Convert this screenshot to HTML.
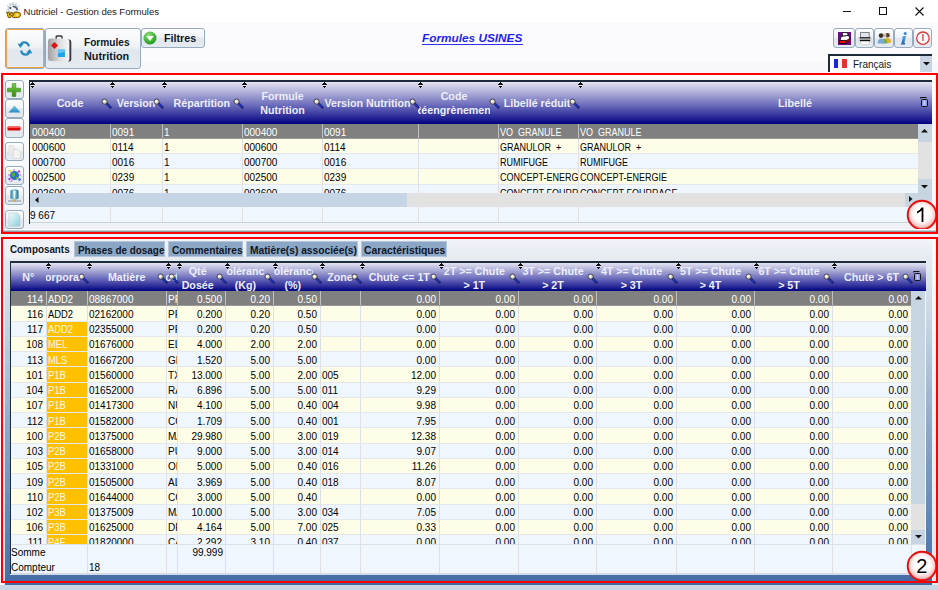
<!DOCTYPE html><html><head><meta charset="utf-8"><style>
*{margin:0;padding:0;box-sizing:border-box}
html,body{width:938px;height:590px;overflow:hidden;background:#fbfbfe;font-family:"Liberation Sans", sans-serif;}
.a{position:absolute}
.t{position:absolute;white-space:nowrap;line-height:1}
.btn{position:absolute;border:1px solid #97abbf;border-radius:3px;background:linear-gradient(#fdfdfe 0%,#f0f3f6 45%,#e1e7ee 55%,#e6ebf1 100%)}
.hdr{position:absolute;background:linear-gradient(#e4e4f2 0%,#aeaed8 25%,#6c6cbc 55%,#262696 85%,#000080 100%)}
.ht{position:absolute;white-space:nowrap;color:#eceefa;font-weight:bold;font-size:10.7px;line-height:14px;overflow:hidden}
.row{position:absolute;left:0;right:0;overflow:hidden}
.c{position:absolute;top:0;height:100%;overflow:hidden;white-space:nowrap;font-size:10px;line-height:16px;padding:0 0 0 1px;color:#000}
.r{text-align:right;padding-right:3px}
.u{display:inline-block;transform-origin:0 0}
</style></head><body>
<div class="a" style="left:0;top:0;width:938px;height:23px;background:#fff"></div>
<svg class="a" style="left:4px;top:2px" width="18" height="18" viewBox="0 0 18 18">
<circle cx="9" cy="6.8" r="5.6" fill="none" stroke="#d4dce4" stroke-width="2.4" stroke-dasharray="1.8 1.3"/>
<circle cx="9" cy="6.8" r="4.6" fill="#eef3f8" stroke="#9aa6b2" stroke-width="0.6"/>
<path d="M8.6 4.6 Q12.2 4 13.2 8.2" fill="none" stroke="#4a5560" stroke-width="1.4"/>
<circle cx="6.4" cy="6" r="1" fill="#3a4450"/>
<path d="M2.6 10.2 L5 10.2 L5.9 13.4 L6.9 10.6 L8.5 10.6 L9.4 13.4 L10.2 10.2 L13.6 10.2 Q16.8 10.4 16.6 12.8 Q16.4 15.6 13.4 15.6 L9.8 15.6 L8.9 15.6 L7.7 13 L6.6 15.6 L4.4 15.6 Z" fill="#f4c400" stroke="#5a4200" stroke-width="0.9"/>
<circle cx="13.3" cy="12.9" r="1.1" fill="#e0e8f4"/>
</svg>
<div class="t" style="left:23.5px;top:7px;font-size:9.6px;letter-spacing:-0.05px;color:#1a1a2a">Nutriciel - Gestion des Formules</div>
<div class="a" style="left:843px;top:11px;width:8px;height:1px;background:#111"></div>
<div class="a" style="left:879px;top:7px;width:8px;height:8px;border:1px solid #111"></div>
<svg class="a" style="left:915px;top:7px" width="9" height="9" viewBox="0 0 9 9"><path d="M0.5 0.5 L8.5 8.5 M8.5 0.5 L0.5 8.5" stroke="#111" stroke-width="1.1"/></svg>
<div class="a" style="left:0;top:62px;width:938px;height:11px;background:#f8f8fc"></div>
<div class="btn" style="left:5px;top:28px;width:40px;height:41px;"><div class="a" style="left:0;top:0;right:0;bottom:0;border:1.5px solid #f4a43c;border-radius:2px"></div></div>
<svg class="a" style="left:16px;top:39px" width="18" height="19" viewBox="0 0 18 19">
<path d="M13 7.4 Q11.6 2.8 7.4 3.4 Q5.6 3.8 4.8 5.6" fill="none" stroke="#2389bf" stroke-width="2.3"/>
<path d="M4.2 9 L1.6 4.4 L7.6 5.2 Z" fill="#2389bf"/>
<path d="M5 11.6 Q6.4 16.2 10.6 15.6 Q12.4 15.2 13.2 13.4" fill="none" stroke="#2389bf" stroke-width="2.3"/>
<path d="M13.8 10 L16.4 14.6 L10.4 13.8 Z" fill="#2389bf"/>
</svg>
<div class="btn" style="left:45px;top:28px;width:96px;height:41px;"></div>
<svg class="a" style="left:47px;top:35px" width="26" height="28" viewBox="0 0 26 28">
<defs><linearGradient id="bagg" x1="0" y1="0" x2="1" y2="0"><stop offset="0" stop-color="#a0a0a4"/><stop offset="0.55" stop-color="#e2e2e4"/><stop offset="1" stop-color="#fafafa"/></linearGradient></defs>
<path d="M9.2 4 L9.2 1.8 Q9.2 1 10 1 L14.2 1 Q15 1 15 1.8 L15 4" fill="none" stroke="#34343a" stroke-width="1.4"/>
<path d="M1 6 Q1 3.6 3.4 3.6 L21 3.6 Q24.3 3.6 24.3 6.6 L24.3 24.6 Q24.3 26.6 22 26.6 L3.4 26 Q1 26 1 23.6 Z" fill="url(#bagg)"/>
<path d="M22 4.2 Q24.3 4.8 24.3 6.8 L24.3 24.6 Q24.3 26.6 22 26.6 L20.6 26.6 Q22.4 26 22.4 24.4 L22.4 7 Q22.4 5.4 21.4 4.6 Z" fill="#3a3a46"/>
<path d="M7.5 7 L11 10.5 L7.5 14 L4 10.5 Z" fill="#dc1414"/>
<rect x="10.9" y="14.6" width="7" height="7.4" fill="#1ea0ea"/>
<path d="M10.9 14.6 L17.9 14.6 L17.9 17 L10.9 18.6 Z" fill="#62c6f4"/>
</svg>
<div class="t" style="left:84px;top:37px;font-size:11px;font-weight:bold;color:#101828;transform:scaleX(0.92);transform-origin:0 0">Formules</div>
<div class="t" style="left:84px;top:51px;font-size:11px;font-weight:bold;color:#101828;transform:scaleX(0.985);transform-origin:0 0">Nutrition</div>
<div class="btn" style="left:141px;top:28px;width:64px;height:20px;"></div>
<svg class="a" style="left:143px;top:31px" width="14" height="14" viewBox="0 0 14 14">
<defs><radialGradient id="gg" cx="0.4" cy="0.3" r="0.7"><stop offset="0" stop-color="#8fe07a"/><stop offset="1" stop-color="#1e9a1e"/></radialGradient></defs>
<circle cx="7" cy="7" r="6.5" fill="url(#gg)"/><path d="M3.3 5 L10.7 5 L7 10 Z" fill="#fff"/></svg>
<div class="t" style="left:164px;top:33px;font-size:11px;font-weight:bold;color:#101828;transform:scaleX(0.975);transform-origin:0 0">Filtres</div>
<div class="t" style="left:422px;top:32.5px;font-size:11.8px;font-weight:bold;font-style:italic;color:#1f1fee">Formules USINES</div>
<div class="a" style="left:422px;top:44px;width:101px;height:1px;background:#3030f0"></div>
<div class="btn" style="left:833px;top:28px;width:22px;height:20px;"></div>
<div class="btn" style="left:855px;top:28px;width:19px;height:20px;"></div>
<div class="btn" style="left:874px;top:28px;width:20px;height:20px;"></div>
<div class="btn" style="left:894px;top:28px;width:19px;height:20px;"></div>
<div class="btn" style="left:913px;top:28px;width:19px;height:20px;"></div>
<svg class="a" style="left:838px;top:32px" width="13" height="13" viewBox="0 0 13 13"><rect x="0" y="0" width="13" height="13" fill="#6c0c86"/>
<path d="M4.2 0.6 L9.4 0.6 L10.2 3.6 L4.6 4.4 Z" fill="#fff" stroke="#000" stroke-width="0.8"/>
<path d="M3 4.4 L10.6 3.4 L12 6.6 L11.6 8.4 L4 9.4 L2.4 7.6 Z" fill="#fff" stroke="#000" stroke-width="0.8"/>
<path d="M1.2 8.6 L8 8.4 L8.2 11.4 L1.6 11.6 Z" fill="#ff0000" stroke="#000" stroke-width="0.8"/>
<path d="M8.4 8.4 L11.6 6.6 L11.4 9.4 L8.4 11.4 Z" fill="#c00000" stroke="#000" stroke-width="0.6"/>
</svg>
<svg class="a" style="left:858px;top:32px" width="14" height="13" viewBox="0 0 14 13">
<rect x="2.6" y="0.5" width="8.6" height="5" fill="#dfe6ee" stroke="#6a6a6a" stroke-width="0.8"/>
<rect x="0.6" y="5" width="12.8" height="4.6" fill="#c8c8c8"/>
<rect x="1.8" y="5.2" width="10.4" height="1.2" fill="#111"/>
<rect x="2" y="7.8" width="10" height="1.4" fill="#111"/>
<rect x="3" y="9.4" width="8" height="3" fill="#fafafa" stroke="#c0c0c0" stroke-width="0.5"/>
</svg>
<svg class="a" style="left:877px;top:32px" width="15" height="12" viewBox="0 0 15 12">
<circle cx="10.6" cy="3.2" r="2.2" fill="#5a4030"/><path d="M7.6 11 Q7.8 6 10.6 6 Q13.6 6 14 9.6 L13 11 Z" fill="#e8b020"/>
<circle cx="7.4" cy="3.4" r="2.1" fill="#c8c0a0"/><path d="M5 11.4 Q5 6.4 7.6 6.4 Q10.2 6.4 10.4 11.4 Z" fill="#7ab040"/>
<circle cx="4" cy="3.6" r="2.3" fill="#3a3028"/><path d="M0.6 11.6 Q1 6.6 4 6.6 Q7 6.6 7.6 11.6 Z" fill="#78a8d8"/>
</svg>
<svg class="a" style="left:899px;top:32px" width="9" height="13" viewBox="0 0 9 13"><defs><linearGradient id="ig" x1="0" y1="0" x2="0" y2="1"><stop offset="0" stop-color="#5aa8e8"/><stop offset="1" stop-color="#1a5cb0"/></linearGradient></defs>
<ellipse cx="6.2" cy="1.4" rx="1.6" ry="1.3" fill="url(#ig)"/>
<path d="M3.6 4.2 L7.2 3.8 L5.4 10.6 Q5.2 11.2 6.2 11 L5.8 12.4 L1.6 12.6 Q1.4 11.8 2.4 11.4 L3.8 5.4 L3 5.4 Z" fill="url(#ig)"/>
</svg>
<svg class="a" style="left:915px;top:31px" width="16" height="15" viewBox="0 0 16 15"><circle cx="7.9" cy="7.2" r="6.2" fill="#fbfbfb" stroke="#d83a3a" stroke-width="1.3"/><rect x="7.3" y="3" width="1.3" height="7" fill="#d83a3a"/></svg>
<div class="a" style="left:828px;top:54px;width:104px;height:18px;background:#fff;border-top:2px solid #1e2a38;border-left:2px solid #1e2a38"></div>
<div class="a" style="left:920px;top:56px;width:12px;height:16px;background:#c9d5e2"></div>
<svg class="a" style="left:922.5px;top:62px" width="7" height="4"><path d="M0 0 L7 0 L3.5 3.5 Z" fill="#111"/></svg>
<div class="a" style="left:834px;top:59px;width:4px;height:9px;background:#1a2ad0"></div><div class="a" style="left:838px;top:59px;width:4px;height:9px;background:#f4f4f8"></div><div class="a" style="left:842px;top:59px;width:4.5px;height:9px;background:#e83030"></div>
<div class="t" style="left:853px;top:60px;font-size:10px;color:#101828">Français</div>
<div class="a" style="left:3px;top:75px;width:933px;height:157px;background:linear-gradient(#fdfdfe,#f5f7fa 80%,#edf0f5)"></div>
<div class="btn" style="left:5px;top:80px;width:19px;height:19px;"></div>
<div class="btn" style="left:5px;top:99px;width:19px;height:19px;"></div>
<div class="btn" style="left:5px;top:118px;width:19px;height:20px;"></div>
<div class="btn" style="left:5px;top:142px;width:19px;height:19px;"></div>
<div class="btn" style="left:5px;top:166px;width:19px;height:19px;"></div>
<div class="btn" style="left:5px;top:186px;width:19px;height:19px;"></div>
<div class="btn" style="left:5px;top:210px;width:19px;height:19px;"></div>
<svg class="a" style="left:7px;top:83px" width="14" height="14" viewBox="0 0 14 14"><defs><linearGradient id="pg" x1="0" y1="0" x2="0" y2="1"><stop offset="0" stop-color="#7cd040"/><stop offset="1" stop-color="#2e8a10"/></linearGradient></defs><path d="M5.2 0.5 L8.8 0.5 L8.8 5.2 L13.5 5.2 L13.5 8.8 L8.8 8.8 L8.8 13.5 L5.2 13.5 L5.2 8.8 L0.5 8.8 L0.5 5.2 L5.2 5.2 Z" fill="url(#pg)" stroke="#3a8a20" stroke-width="0.6"/></svg>
<svg class="a" style="left:8px;top:105px" width="13" height="8" viewBox="0 0 13 8"><defs><linearGradient id="tg" x1="0" y1="0" x2="0" y2="1"><stop offset="0" stop-color="#7cc8e8"/><stop offset="1" stop-color="#2a8ac0"/></linearGradient></defs><path d="M6.5 0.5 L12.5 7.5 L0.5 7.5 Z" fill="url(#tg)"/></svg>
<svg class="a" style="left:7px;top:126px" width="14" height="5" viewBox="0 0 14 5"><rect x="0.5" y="0.5" width="13" height="4" rx="1" fill="#d80a0a"/><rect x="1" y="0.7" width="12" height="1.3" fill="#ff5a5a"/></svg>
<svg class="a" style="left:8px;top:145px" width="13" height="14" viewBox="0 0 13 14"><path d="M1 0.5 L5 0.5 L7 2.5 L7 10 L1 10 Z" fill="#ececec" stroke="#d8d8d8" stroke-width="0.6"/><path d="M5 4.5 L10 4.5 L12.5 7 L12.5 13.5 L5 13.5 Z" fill="#f2f2f2" stroke="#d0d0d0" stroke-width="0.6"/></svg>
<svg class="a" style="left:7px;top:168px" width="15" height="15" viewBox="0 0 15 15"><circle cx="7.5" cy="7.5" r="4.5" fill="#2a70c8"/><path d="M4.5 6 Q6 4 8 5 Q9 7 7 9 Q5 9 4.5 6 Z" fill="#5ab030"/><path d="M9 9 Q11 8.5 11.5 10 Q10 12 9 11 Z" fill="#5ab030"/><circle cx="3" cy="3" r="1.3" fill="#f0e020"/><circle cx="12" cy="3.5" r="1.2" fill="#d040d0"/><circle cx="2.5" cy="11" r="1.2" fill="#c030e0"/><circle cx="12.5" cy="11.5" r="1.2" fill="#3050f0"/><path d="M1 7 L3 7 M12 7 L14 7 M7 1 L7 3 M5 12 L4 14" stroke="#d050d0" stroke-width="1"/></svg>
<svg class="a" style="left:7px;top:188px" width="15" height="15" viewBox="0 0 15 15"><defs><linearGradient id="cyg" x1="0" y1="0" x2="1" y2="0"><stop offset="0" stop-color="#2a7a98"/><stop offset="0.45" stop-color="#a8e0f0"/><stop offset="1" stop-color="#1e6a88"/></linearGradient></defs><path d="M3.5 2.5 Q7.5 -0.5 11.5 2.5 L11.5 10.5 Q7.5 13 3.5 10.5 Z" fill="url(#cyg)"/><path d="M6.5 3 L8.5 3 L8 10 L7 10 Z" fill="#e8f6fb"/><path d="M1 13 L14 13" stroke="#6a7a88" stroke-width="0.8"/><rect x="6.6" y="11.5" width="1.8" height="2" fill="#e0a020"/></svg>
<svg class="a" style="left:8px;top:212px" width="13" height="15" viewBox="0 0 13 15"><defs><linearGradient id="dg" x1="0" y1="0" x2="1" y2="1"><stop offset="0" stop-color="#f4fbfd"/><stop offset="1" stop-color="#8ad0dc"/></linearGradient></defs><path d="M1 0.8 L9 0.8 L12 3.8 L12 14.2 L1 14.2 Z" fill="url(#dg)" stroke="#b8c8d0" stroke-width="0.6"/></svg>
<div class="a" style="left:29px;top:80px;width:903px;height:2px;background:#1e2c3c"></div>
<div class="a" style="left:29px;top:80px;width:1px;height:144px;background:#1e2c3c"></div>
<div class="hdr" style="left:30px;top:82px;width:902px;height:42px"></div>
<div class="ht" style="left:30px;width:80px;top:96px;height:14px"><span style="position:absolute;left:40px;top:0px;transform:translateX(-50%)">Code</span></div>
<div class="ht" style="left:110px;width:52px;top:96px;height:14px"><span style="position:absolute;left:26px;top:0px;transform:translateX(-50%)">Version</span></div>
<div class="ht" style="left:162px;width:80px;top:96px;height:14px"><span style="position:absolute;left:39.80000000000001px;top:0px;transform:translateX(-50%)">Répartition</span></div>
<div class="ht" style="left:242px;width:80px;top:89px;height:28px"><span style="position:absolute;left:40.5px;top:0px;transform:translateX(-50%)">Formule</span><span style="position:absolute;left:40.5px;top:14px;transform:translateX(-50%)">Nutrition</span></div>
<div class="ht" style="left:322px;width:96px;top:96px;height:14px"><span style="position:absolute;left:45.5px;top:0px;transform:translateX(-50%)">Version Nutrition</span></div>
<div class="ht" style="left:418px;width:72px;top:89px;height:28px"><span style="position:absolute;left:36px;top:0px;transform:translateX(-50%)">Code</span><span style="position:absolute;left:36px;top:14px;transform:translateX(-50%)">Réengrènement</span></div>
<div class="ht" style="left:498px;width:80px;top:96px;height:14px"><span style="position:absolute;left:39px;top:0px;transform:translateX(-50%)">Libellé réduit</span></div>
<div class="ht" style="left:578px;width:340px;top:96px;height:14px"><span style="position:absolute;left:217px;top:0px;transform:translateX(-50%)">Libellé</span></div>
<svg class="a" style="left:30px;top:82px" width="5" height="6" viewBox="0 0 5 6" shape-rendering="crispEdges"><rect x="2" y="0" width="1" height="1" fill="#111"/><rect x="1" y="1" width="3" height="1" fill="#111"/><rect x="0" y="2" width="5" height="1" fill="#111"/><rect x="0" y="3" width="5" height="1" fill="#e8e8f4"/><rect x="0" y="3.5" width="5" height="0" fill="#111"/><rect x="1" y="4" width="3" height="1" fill="#111"/><rect x="2" y="5" width="1" height="1" fill="#111"/></svg>
<svg class="a" style="left:110px;top:82px" width="5" height="6" viewBox="0 0 5 6" shape-rendering="crispEdges"><rect x="2" y="0" width="1" height="1" fill="#111"/><rect x="1" y="1" width="3" height="1" fill="#111"/><rect x="0" y="2" width="5" height="1" fill="#111"/><rect x="0" y="3" width="5" height="1" fill="#e8e8f4"/><rect x="0" y="3.5" width="5" height="0" fill="#111"/><rect x="1" y="4" width="3" height="1" fill="#111"/><rect x="2" y="5" width="1" height="1" fill="#111"/></svg>
<svg class="a" style="left:162px;top:82px" width="5" height="6" viewBox="0 0 5 6" shape-rendering="crispEdges"><rect x="2" y="0" width="1" height="1" fill="#111"/><rect x="1" y="1" width="3" height="1" fill="#111"/><rect x="0" y="2" width="5" height="1" fill="#111"/><rect x="0" y="3" width="5" height="1" fill="#e8e8f4"/><rect x="0" y="3.5" width="5" height="0" fill="#111"/><rect x="1" y="4" width="3" height="1" fill="#111"/><rect x="2" y="5" width="1" height="1" fill="#111"/></svg>
<svg class="a" style="left:242px;top:82px" width="5" height="6" viewBox="0 0 5 6" shape-rendering="crispEdges"><rect x="2" y="0" width="1" height="1" fill="#111"/><rect x="1" y="1" width="3" height="1" fill="#111"/><rect x="0" y="2" width="5" height="1" fill="#111"/><rect x="0" y="3" width="5" height="1" fill="#e8e8f4"/><rect x="0" y="3.5" width="5" height="0" fill="#111"/><rect x="1" y="4" width="3" height="1" fill="#111"/><rect x="2" y="5" width="1" height="1" fill="#111"/></svg>
<svg class="a" style="left:322px;top:82px" width="5" height="6" viewBox="0 0 5 6" shape-rendering="crispEdges"><rect x="2" y="0" width="1" height="1" fill="#111"/><rect x="1" y="1" width="3" height="1" fill="#111"/><rect x="0" y="2" width="5" height="1" fill="#111"/><rect x="0" y="3" width="5" height="1" fill="#e8e8f4"/><rect x="0" y="3.5" width="5" height="0" fill="#111"/><rect x="1" y="4" width="3" height="1" fill="#111"/><rect x="2" y="5" width="1" height="1" fill="#111"/></svg>
<svg class="a" style="left:418px;top:82px" width="5" height="6" viewBox="0 0 5 6" shape-rendering="crispEdges"><rect x="2" y="0" width="1" height="1" fill="#111"/><rect x="1" y="1" width="3" height="1" fill="#111"/><rect x="0" y="2" width="5" height="1" fill="#111"/><rect x="0" y="3" width="5" height="1" fill="#e8e8f4"/><rect x="0" y="3.5" width="5" height="0" fill="#111"/><rect x="1" y="4" width="3" height="1" fill="#111"/><rect x="2" y="5" width="1" height="1" fill="#111"/></svg>
<svg class="a" style="left:498px;top:82px" width="5" height="6" viewBox="0 0 5 6" shape-rendering="crispEdges"><rect x="2" y="0" width="1" height="1" fill="#111"/><rect x="1" y="1" width="3" height="1" fill="#111"/><rect x="0" y="2" width="5" height="1" fill="#111"/><rect x="0" y="3" width="5" height="1" fill="#e8e8f4"/><rect x="0" y="3.5" width="5" height="0" fill="#111"/><rect x="1" y="4" width="3" height="1" fill="#111"/><rect x="2" y="5" width="1" height="1" fill="#111"/></svg>
<svg class="a" style="left:578px;top:82px" width="5" height="6" viewBox="0 0 5 6" shape-rendering="crispEdges"><rect x="2" y="0" width="1" height="1" fill="#111"/><rect x="1" y="1" width="3" height="1" fill="#111"/><rect x="0" y="2" width="5" height="1" fill="#111"/><rect x="0" y="3" width="5" height="1" fill="#e8e8f4"/><rect x="0" y="3.5" width="5" height="0" fill="#111"/><rect x="1" y="4" width="3" height="1" fill="#111"/><rect x="2" y="5" width="1" height="1" fill="#111"/></svg>
<svg class="a" style="left:101px;top:97.5px" width="11" height="11" viewBox="0 0 11 11"><path d="M5.4 5.4 L9.4 9.4" stroke="#15153a" stroke-width="2.4" stroke-linecap="round"/><path d="M5.6 5.6 L9.2 9.2" stroke="#2040ff" stroke-width="1.2" stroke-linecap="round"/><circle cx="3.6" cy="3.6" r="2.6" fill="#cfcfc8" stroke="#2e2e3a" stroke-width="0.8"/><circle cx="3.3" cy="3.3" r="1.2" fill="#f6f6f0"/></svg>
<svg class="a" style="left:153px;top:97.5px" width="11" height="11" viewBox="0 0 11 11"><path d="M5.4 5.4 L9.4 9.4" stroke="#15153a" stroke-width="2.4" stroke-linecap="round"/><path d="M5.6 5.6 L9.2 9.2" stroke="#2040ff" stroke-width="1.2" stroke-linecap="round"/><circle cx="3.6" cy="3.6" r="2.6" fill="#cfcfc8" stroke="#2e2e3a" stroke-width="0.8"/><circle cx="3.3" cy="3.3" r="1.2" fill="#f6f6f0"/></svg>
<svg class="a" style="left:233px;top:97.5px" width="11" height="11" viewBox="0 0 11 11"><path d="M5.4 5.4 L9.4 9.4" stroke="#15153a" stroke-width="2.4" stroke-linecap="round"/><path d="M5.6 5.6 L9.2 9.2" stroke="#2040ff" stroke-width="1.2" stroke-linecap="round"/><circle cx="3.6" cy="3.6" r="2.6" fill="#cfcfc8" stroke="#2e2e3a" stroke-width="0.8"/><circle cx="3.3" cy="3.3" r="1.2" fill="#f6f6f0"/></svg>
<svg class="a" style="left:313px;top:97.5px" width="11" height="11" viewBox="0 0 11 11"><path d="M5.4 5.4 L9.4 9.4" stroke="#15153a" stroke-width="2.4" stroke-linecap="round"/><path d="M5.6 5.6 L9.2 9.2" stroke="#2040ff" stroke-width="1.2" stroke-linecap="round"/><circle cx="3.6" cy="3.6" r="2.6" fill="#cfcfc8" stroke="#2e2e3a" stroke-width="0.8"/><circle cx="3.3" cy="3.3" r="1.2" fill="#f6f6f0"/></svg>
<svg class="a" style="left:409px;top:97.5px" width="11" height="11" viewBox="0 0 11 11"><path d="M5.4 5.4 L9.4 9.4" stroke="#15153a" stroke-width="2.4" stroke-linecap="round"/><path d="M5.6 5.6 L9.2 9.2" stroke="#2040ff" stroke-width="1.2" stroke-linecap="round"/><circle cx="3.6" cy="3.6" r="2.6" fill="#cfcfc8" stroke="#2e2e3a" stroke-width="0.8"/><circle cx="3.3" cy="3.3" r="1.2" fill="#f6f6f0"/></svg>
<svg class="a" style="left:489px;top:97.5px" width="11" height="11" viewBox="0 0 11 11"><path d="M5.4 5.4 L9.4 9.4" stroke="#15153a" stroke-width="2.4" stroke-linecap="round"/><path d="M5.6 5.6 L9.2 9.2" stroke="#2040ff" stroke-width="1.2" stroke-linecap="round"/><circle cx="3.6" cy="3.6" r="2.6" fill="#cfcfc8" stroke="#2e2e3a" stroke-width="0.8"/><circle cx="3.3" cy="3.3" r="1.2" fill="#f6f6f0"/></svg>
<svg class="a" style="left:569px;top:97.5px" width="11" height="11" viewBox="0 0 11 11"><path d="M5.4 5.4 L9.4 9.4" stroke="#15153a" stroke-width="2.4" stroke-linecap="round"/><path d="M5.6 5.6 L9.2 9.2" stroke="#2040ff" stroke-width="1.2" stroke-linecap="round"/><circle cx="3.6" cy="3.6" r="2.6" fill="#cfcfc8" stroke="#2e2e3a" stroke-width="0.8"/><circle cx="3.3" cy="3.3" r="1.2" fill="#f6f6f0"/></svg>
<svg class="a" style="left:920px;top:97px" width="8" height="10" viewBox="0 0 8 10"><path d="M0.5 1.5 L0.5 0.5 L6.5 0.5" fill="none" stroke="#111" stroke-width="1"/><rect x="1.5" y="2.5" width="6" height="7" rx="0.8" fill="#8c9ce8" stroke="#111" stroke-width="1"/><rect x="3.6" y="3.5" width="1.8" height="5" fill="#c8d0ff"/></svg>
<div class="a" style="left:30px;top:124px;width:888px;height:69px;overflow:hidden">
<div class="row" style="top:0px;height:15px;background:#808080;border-bottom:1px solid #9a9a9a">
<div class="c" style="left:0px;width:80px;color:#ffffff;padding-top:1px;padding-left:2px;border-left:0 solid #c0c0c0">000400</div>
<div class="c" style="left:80px;width:52px;color:#ffffff;padding-top:1px;border-left:1px solid #c0c0c0">0091</div>
<div class="c" style="left:132px;width:80px;color:#ffffff;padding-top:1px;border-left:1px solid #c0c0c0">1</div>
<div class="c" style="left:212px;width:80px;color:#ffffff;padding-top:1px;border-left:1px solid #c0c0c0">000400</div>
<div class="c" style="left:292px;width:96px;color:#ffffff;padding-top:1px;border-left:1px solid #c0c0c0">0091</div>
<div class="c" style="left:388px;width:80px;color:#ffffff;padding-top:1px;border-left:1px solid #c0c0c0"></div>
<div class="c" style="left:468px;width:80px;color:#ffffff;padding-top:1px;border-left:1px solid #c0c0c0"><span class="u" style="transform:scaleX(0.9)">VO&nbsp;&nbsp;GRANULE</span></div>
<div class="c" style="left:548px;width:340px;color:#ffffff;padding-top:1px;border-left:1px solid #c0c0c0"><span class="u" style="transform:scaleX(0.9)">VO&nbsp;&nbsp;GRANULE</span></div>
</div>
<div class="row" style="top:15px;height:15px;background:#fefee8;border-bottom:1px solid #e4e8ec">
<div class="c" style="left:0px;width:80px;color:#000;padding-top:1px;padding-left:2px;border-left:0 solid #dde1e6">000600</div>
<div class="c" style="left:80px;width:52px;color:#000;padding-top:1px;border-left:1px solid #dde1e6">0114</div>
<div class="c" style="left:132px;width:80px;color:#000;padding-top:1px;border-left:1px solid #dde1e6">1</div>
<div class="c" style="left:212px;width:80px;color:#000;padding-top:1px;border-left:1px solid #dde1e6">000600</div>
<div class="c" style="left:292px;width:96px;color:#000;padding-top:1px;border-left:1px solid #dde1e6">0114</div>
<div class="c" style="left:388px;width:80px;color:#000;padding-top:1px;border-left:1px solid #dde1e6"></div>
<div class="c" style="left:468px;width:80px;color:#000;padding-top:1px;border-left:1px solid #dde1e6"><span class="u" style="transform:scaleX(0.9)">GRANULOR&nbsp;&nbsp;+</span></div>
<div class="c" style="left:548px;width:340px;color:#000;padding-top:1px;border-left:1px solid #dde1e6"><span class="u" style="transform:scaleX(0.9)">GRANULOR&nbsp;&nbsp;+</span></div>
</div>
<div class="row" style="top:30px;height:15px;background:#f0f6fd;border-bottom:1px solid #e4e8ec">
<div class="c" style="left:0px;width:80px;color:#000;padding-top:1px;padding-left:2px;border-left:0 solid #dde1e6">000700</div>
<div class="c" style="left:80px;width:52px;color:#000;padding-top:1px;border-left:1px solid #dde1e6">0016</div>
<div class="c" style="left:132px;width:80px;color:#000;padding-top:1px;border-left:1px solid #dde1e6">1</div>
<div class="c" style="left:212px;width:80px;color:#000;padding-top:1px;border-left:1px solid #dde1e6">000700</div>
<div class="c" style="left:292px;width:96px;color:#000;padding-top:1px;border-left:1px solid #dde1e6">0016</div>
<div class="c" style="left:388px;width:80px;color:#000;padding-top:1px;border-left:1px solid #dde1e6"></div>
<div class="c" style="left:468px;width:80px;color:#000;padding-top:1px;border-left:1px solid #dde1e6"><span class="u" style="transform:scaleX(0.9)">RUMIFUGE</span></div>
<div class="c" style="left:548px;width:340px;color:#000;padding-top:1px;border-left:1px solid #dde1e6"><span class="u" style="transform:scaleX(0.9)">RUMIFUGE</span></div>
</div>
<div class="row" style="top:45px;height:16px;background:#fefee8;border-bottom:1px solid #e4e8ec">
<div class="c" style="left:0px;width:80px;color:#000;padding-top:1px;padding-left:2px;border-left:0 solid #dde1e6">002500</div>
<div class="c" style="left:80px;width:52px;color:#000;padding-top:1px;border-left:1px solid #dde1e6">0239</div>
<div class="c" style="left:132px;width:80px;color:#000;padding-top:1px;border-left:1px solid #dde1e6">1</div>
<div class="c" style="left:212px;width:80px;color:#000;padding-top:1px;border-left:1px solid #dde1e6">002500</div>
<div class="c" style="left:292px;width:96px;color:#000;padding-top:1px;border-left:1px solid #dde1e6">0239</div>
<div class="c" style="left:388px;width:80px;color:#000;padding-top:1px;border-left:1px solid #dde1e6"></div>
<div class="c" style="left:468px;width:80px;color:#000;padding-top:1px;border-left:1px solid #dde1e6"><span class="u" style="transform:scaleX(0.9)">CONCEPT-ENERGIE</span></div>
<div class="c" style="left:548px;width:340px;color:#000;padding-top:1px;border-left:1px solid #dde1e6"><span class="u" style="transform:scaleX(0.9)">CONCEPT-ENERGIE</span></div>
</div>
<div class="row" style="top:61px;height:15px;background:#f0f6fd;border-bottom:1px solid #e4e8ec">
<div class="c" style="left:0px;width:80px;color:#000;padding-top:1px;padding-left:2px;border-left:0 solid #dde1e6">002600</div>
<div class="c" style="left:80px;width:52px;color:#000;padding-top:1px;border-left:1px solid #dde1e6">0076</div>
<div class="c" style="left:132px;width:80px;color:#000;padding-top:1px;border-left:1px solid #dde1e6">1</div>
<div class="c" style="left:212px;width:80px;color:#000;padding-top:1px;border-left:1px solid #dde1e6">002600</div>
<div class="c" style="left:292px;width:96px;color:#000;padding-top:1px;border-left:1px solid #dde1e6">0076</div>
<div class="c" style="left:388px;width:80px;color:#000;padding-top:1px;border-left:1px solid #dde1e6"></div>
<div class="c" style="left:468px;width:80px;color:#000;padding-top:1px;border-left:1px solid #dde1e6"><span class="u" style="transform:scaleX(0.9)">CONCEPT-FOURRAGE</span></div>
<div class="c" style="left:548px;width:340px;color:#000;padding-top:1px;border-left:1px solid #dde1e6"><span class="u" style="transform:scaleX(0.9)">CONCEPT-FOURRAGE</span></div>
</div>
</div>
<div class="a" style="left:918px;top:124px;width:14px;height:69px;background:#e2e2e2"></div>
<div class="a" style="left:918px;top:124px;width:14px;height:18px;background:#c7d5e3"></div>
<div class="a" style="left:918px;top:179px;width:14px;height:14px;background:#c7d5e3"></div>
<svg class="a" style="left:921px;top:128.5px" width="7" height="4"><path d="M0 3.5 L7 3.5 L3.5 0 Z" fill="#111"/></svg>
<svg class="a" style="left:920.5px;top:184.5px" width="7" height="4"><path d="M0 0 L7 0 L3.5 3.5 Z" fill="#111"/></svg>
<div class="a" style="left:30px;top:193px;width:902px;height:14px;background:#e2e2e2"></div>
<div class="a" style="left:30px;top:193px;width:377px;height:14px;background:#c5d5e5"></div>
<div class="a" style="left:905px;top:193px;width:27px;height:14px;background:#c7d5e3"></div>
<svg class="a" style="left:35px;top:196.5px" width="4" height="6"><path d="M3.5 0 L3.5 6 L0 3 Z" fill="#111"/></svg>
<svg class="a" style="left:909px;top:196px" width="4" height="6"><path d="M0 0 L0 6 L3.5 3 Z" fill="#111"/></svg>
<div class="a" style="left:30px;top:207px;width:902px;height:16px;background:#f0f6fd;border-bottom:1px solid #c9d0d8"></div>
<div class="a" style="left:110px;top:207px;width:1px;height:15px;background:#dde1e6"></div>
<div class="a" style="left:162px;top:207px;width:1px;height:15px;background:#dde1e6"></div>
<div class="a" style="left:242px;top:207px;width:1px;height:15px;background:#dde1e6"></div>
<div class="a" style="left:322px;top:207px;width:1px;height:15px;background:#dde1e6"></div>
<div class="a" style="left:418px;top:207px;width:1px;height:15px;background:#dde1e6"></div>
<div class="a" style="left:498px;top:207px;width:1px;height:15px;background:#dde1e6"></div>
<div class="a" style="left:578px;top:207px;width:1px;height:15px;background:#dde1e6"></div>
<div class="t" style="left:30px;top:211px;font-size:10px">9 667</div>
<svg class="a" style="left:904.7px;top:198px" width="34" height="34" viewBox="0 0 34 34">
<defs><radialGradient id="cg1" cx="0.5" cy="0.45" r="0.5"><stop offset="0" stop-color="#ffffff"/><stop offset="0.6" stop-color="#fffafa"/><stop offset="0.9" stop-color="#f6caca"/><stop offset="1" stop-color="#ee9a9a"/></radialGradient></defs>
<circle cx="17" cy="17" r="14.3" fill="url(#cg1)" stroke="#e40f0f" stroke-width="1.9"/>
</svg>
<svg class="a" style="left:900px;top:200px" width="30" height="30" viewBox="0 0 30 30"><path d="M21.6 7.4 L23.4 7.4 L23.4 21.9 L21.6 21.9 L21.6 10.6 Q19.8 12.3 17 13.4 L17 11.5 Q20.2 10 21.6 7.4 Z" fill="#000"/></svg>
<div class="a" style="left:0;top:585px;width:938px;height:5px;background:#c9d5e3"></div>
<div class="a" style="left:3px;top:239px;width:935px;height:346px;background:linear-gradient(#f8fafc,#dfe7ef)"></div>
<div class="a" style="left:5px;top:239px;width:927px;height:346px;background:linear-gradient(#f0f3f8 0%,#d8e0ea 13.6%,#c0d0e0 28%,#8fa8c8 54.6%,#5c84b4 83%,#4a70a8 97%,#4068a2 100%)"></div>
<div class="a" style="left:6px;top:240px;width:68px;height:18px;background:#eef1f6"></div>
<div class="t" style="left:10px;top:244px;font-size:11px;font-weight:bold;color:#101828;transform:scaleX(0.895);transform-origin:0 0">Composants</div>
<div class="a" style="left:74px;top:241px;width:91px;height:16px;background:#8ca6c6;border:1px solid #b5c6da"></div>
<div class="t" style="left:77.5px;top:245px;font-size:11px;font-weight:bold;color:#0e1626;transform:scaleX(0.9);transform-origin:0 0">Phases de dosage</div>
<div class="a" style="left:168px;top:241px;width:75px;height:16px;background:#8ca6c6;border:1px solid #b5c6da"></div>
<div class="t" style="left:171.5px;top:245px;font-size:11px;font-weight:bold;color:#0e1626;transform:scaleX(0.923);transform-origin:0 0">Commentaires</div>
<div class="a" style="left:246px;top:241px;width:112px;height:16px;background:#8ca6c6;border:1px solid #b5c6da"></div>
<div class="t" style="left:249.5px;top:245px;font-size:11px;font-weight:bold;color:#0e1626;transform:scaleX(0.93);transform-origin:0 0">Matière(s) associée(s)</div>
<div class="a" style="left:361px;top:241px;width:86px;height:16px;background:#8ca6c6;border:1px solid #b5c6da"></div>
<div class="t" style="left:364px;top:245px;font-size:11px;font-weight:bold;color:#0e1626;transform:scaleX(0.942);transform-origin:0 0">Caractéristiques</div>
<div class="a" style="left:3px;top:229px;width:933px;height:1px;background:#fbfcfd"></div>
<div class="a" style="left:3px;top:230px;width:933px;height:1px;background:#c4ced4"></div>
<div class="a" style="left:3px;top:231px;width:933px;height:1px;background:#8c9ca2"></div>
<div class="a" style="left:0;top:234px;width:938px;height:3px;background:#eaf4f8"></div>
<div class="a" style="left:10px;top:261px;width:916px;height:314px;background:#f0f6fd"></div>
<div class="a" style="left:10px;top:261px;width:916px;height:2px;background:#1e2c3c"></div>
<div class="a" style="left:10px;top:261px;width:1px;height:313px;background:#1e2c3c"></div>
<div class="hdr" style="left:11px;top:263px;width:915px;height:28px"></div>
<div class="ht" style="left:11px;width:35px;top:270px;height:14px"><span style="position:absolute;left:17.3px;top:0px;transform:translateX(-50%)">N°</span></div>
<div class="ht" style="left:46px;width:34px;top:270px;height:14px"><span style="position:absolute;left:18px;top:0px;transform:translateX(-50%)">Incorporation</span></div>
<div class="ht" style="left:87px;width:79px;top:270px;height:14px"><span style="position:absolute;left:39.7px;top:0px;transform:translateX(-50%)">Matière</span></div>
<div class="ht" style="left:166px;width:11px;top:270px;height:14px"><span style="position:absolute;left:5px;top:0px;transform:translateX(-50%)">Code</span></div>
<div class="ht" style="left:177px;width:40px;top:264px;height:28px"><span style="position:absolute;left:20.69999999999999px;top:0px;transform:translateX(-50%)">Qté</span><span style="position:absolute;left:20.69999999999999px;top:14px;transform:translateX(-50%)">Dosée</span></div>
<div class="ht" style="left:226px;width:39px;top:264px;height:28px"><span style="position:absolute;left:19.5px;top:0px;transform:translateX(-50%)">Tolérance</span><span style="position:absolute;left:19.5px;top:14px;transform:translateX(-50%)">(Kg)</span></div>
<div class="ht" style="left:274px;width:39px;top:264px;height:28px"><span style="position:absolute;left:18.80000000000001px;top:0px;transform:translateX(-50%)">Tolérance</span><span style="position:absolute;left:18.80000000000001px;top:14px;transform:translateX(-50%)">(%)</span></div>
<div class="ht" style="left:320px;width:40px;top:270px;height:14px"><span style="position:absolute;left:20px;top:0px;transform:translateX(-50%)">Zone</span></div>
<div class="ht" style="left:360px;width:79px;top:270px;height:14px"><span style="position:absolute;left:39.30000000000001px;top:0px;transform:translateX(-50%)">Chute &lt;= 1T</span></div>
<div class="ht" style="left:439px;width:71px;top:264px;height:28px"><span style="position:absolute;left:35.30000000000001px;top:0px;transform:translateX(-50%)">2T &gt;= Chute</span><span style="position:absolute;left:35.30000000000001px;top:14px;transform:translateX(-50%)">&gt; 1T</span></div>
<div class="ht" style="left:518px;width:70px;top:264px;height:28px"><span style="position:absolute;left:35px;top:0px;transform:translateX(-50%)">3T &gt;= Chute</span><span style="position:absolute;left:35px;top:14px;transform:translateX(-50%)">&gt; 2T</span></div>
<div class="ht" style="left:596px;width:72px;top:264px;height:28px"><span style="position:absolute;left:35.5px;top:0px;transform:translateX(-50%)">4T &gt;= Chute</span><span style="position:absolute;left:35.5px;top:14px;transform:translateX(-50%)">&gt; 3T</span></div>
<div class="ht" style="left:676px;width:70px;top:264px;height:28px"><span style="position:absolute;left:34.5px;top:0px;transform:translateX(-50%)">5T &gt;= Chute</span><span style="position:absolute;left:34.5px;top:14px;transform:translateX(-50%)">&gt; 4T</span></div>
<div class="ht" style="left:754px;width:70px;top:264px;height:28px"><span style="position:absolute;left:35px;top:0px;transform:translateX(-50%)">6T &gt;= Chute</span><span style="position:absolute;left:35px;top:14px;transform:translateX(-50%)">&gt; 5T</span></div>
<div class="ht" style="left:832px;width:79px;top:270px;height:14px"><span style="position:absolute;left:39.5px;top:0px;transform:translateX(-50%)">Chute &gt; 6T</span></div>
<svg class="a" style="left:46px;top:263px" width="5" height="6" viewBox="0 0 5 6" shape-rendering="crispEdges"><rect x="2" y="0" width="1" height="1" fill="#111"/><rect x="1" y="1" width="3" height="1" fill="#111"/><rect x="0" y="2" width="5" height="1" fill="#111"/><rect x="0" y="3" width="5" height="1" fill="#e8e8f4"/><rect x="0" y="3.5" width="5" height="0" fill="#111"/><rect x="1" y="4" width="3" height="1" fill="#111"/><rect x="2" y="5" width="1" height="1" fill="#111"/></svg>
<svg class="a" style="left:87px;top:263px" width="5" height="6" viewBox="0 0 5 6" shape-rendering="crispEdges"><rect x="2" y="0" width="1" height="1" fill="#111"/><rect x="1" y="1" width="3" height="1" fill="#111"/><rect x="0" y="2" width="5" height="1" fill="#111"/><rect x="0" y="3" width="5" height="1" fill="#e8e8f4"/><rect x="0" y="3.5" width="5" height="0" fill="#111"/><rect x="1" y="4" width="3" height="1" fill="#111"/><rect x="2" y="5" width="1" height="1" fill="#111"/></svg>
<svg class="a" style="left:166px;top:263px" width="5" height="6" viewBox="0 0 5 6" shape-rendering="crispEdges"><rect x="2" y="0" width="1" height="1" fill="#111"/><rect x="1" y="1" width="3" height="1" fill="#111"/><rect x="0" y="2" width="5" height="1" fill="#111"/><rect x="0" y="3" width="5" height="1" fill="#e8e8f4"/><rect x="0" y="3.5" width="5" height="0" fill="#111"/><rect x="1" y="4" width="3" height="1" fill="#111"/><rect x="2" y="5" width="1" height="1" fill="#111"/></svg>
<svg class="a" style="left:177px;top:263px" width="5" height="6" viewBox="0 0 5 6" shape-rendering="crispEdges"><rect x="2" y="0" width="1" height="1" fill="#111"/><rect x="1" y="1" width="3" height="1" fill="#111"/><rect x="0" y="2" width="5" height="1" fill="#111"/><rect x="0" y="3" width="5" height="1" fill="#e8e8f4"/><rect x="0" y="3.5" width="5" height="0" fill="#111"/><rect x="1" y="4" width="3" height="1" fill="#111"/><rect x="2" y="5" width="1" height="1" fill="#111"/></svg>
<svg class="a" style="left:225px;top:263px" width="5" height="6" viewBox="0 0 5 6" shape-rendering="crispEdges"><rect x="2" y="0" width="1" height="1" fill="#111"/><rect x="1" y="1" width="3" height="1" fill="#111"/><rect x="0" y="2" width="5" height="1" fill="#111"/><rect x="0" y="3" width="5" height="1" fill="#e8e8f4"/><rect x="0" y="3.5" width="5" height="0" fill="#111"/><rect x="1" y="4" width="3" height="1" fill="#111"/><rect x="2" y="5" width="1" height="1" fill="#111"/></svg>
<svg class="a" style="left:273px;top:263px" width="5" height="6" viewBox="0 0 5 6" shape-rendering="crispEdges"><rect x="2" y="0" width="1" height="1" fill="#111"/><rect x="1" y="1" width="3" height="1" fill="#111"/><rect x="0" y="2" width="5" height="1" fill="#111"/><rect x="0" y="3" width="5" height="1" fill="#e8e8f4"/><rect x="0" y="3.5" width="5" height="0" fill="#111"/><rect x="1" y="4" width="3" height="1" fill="#111"/><rect x="2" y="5" width="1" height="1" fill="#111"/></svg>
<svg class="a" style="left:320px;top:263px" width="5" height="6" viewBox="0 0 5 6" shape-rendering="crispEdges"><rect x="2" y="0" width="1" height="1" fill="#111"/><rect x="1" y="1" width="3" height="1" fill="#111"/><rect x="0" y="2" width="5" height="1" fill="#111"/><rect x="0" y="3" width="5" height="1" fill="#e8e8f4"/><rect x="0" y="3.5" width="5" height="0" fill="#111"/><rect x="1" y="4" width="3" height="1" fill="#111"/><rect x="2" y="5" width="1" height="1" fill="#111"/></svg>
<svg class="a" style="left:360px;top:263px" width="5" height="6" viewBox="0 0 5 6" shape-rendering="crispEdges"><rect x="2" y="0" width="1" height="1" fill="#111"/><rect x="1" y="1" width="3" height="1" fill="#111"/><rect x="0" y="2" width="5" height="1" fill="#111"/><rect x="0" y="3" width="5" height="1" fill="#e8e8f4"/><rect x="0" y="3.5" width="5" height="0" fill="#111"/><rect x="1" y="4" width="3" height="1" fill="#111"/><rect x="2" y="5" width="1" height="1" fill="#111"/></svg>
<svg class="a" style="left:439px;top:263px" width="5" height="6" viewBox="0 0 5 6" shape-rendering="crispEdges"><rect x="2" y="0" width="1" height="1" fill="#111"/><rect x="1" y="1" width="3" height="1" fill="#111"/><rect x="0" y="2" width="5" height="1" fill="#111"/><rect x="0" y="3" width="5" height="1" fill="#e8e8f4"/><rect x="0" y="3.5" width="5" height="0" fill="#111"/><rect x="1" y="4" width="3" height="1" fill="#111"/><rect x="2" y="5" width="1" height="1" fill="#111"/></svg>
<svg class="a" style="left:518px;top:263px" width="5" height="6" viewBox="0 0 5 6" shape-rendering="crispEdges"><rect x="2" y="0" width="1" height="1" fill="#111"/><rect x="1" y="1" width="3" height="1" fill="#111"/><rect x="0" y="2" width="5" height="1" fill="#111"/><rect x="0" y="3" width="5" height="1" fill="#e8e8f4"/><rect x="0" y="3.5" width="5" height="0" fill="#111"/><rect x="1" y="4" width="3" height="1" fill="#111"/><rect x="2" y="5" width="1" height="1" fill="#111"/></svg>
<svg class="a" style="left:596px;top:263px" width="5" height="6" viewBox="0 0 5 6" shape-rendering="crispEdges"><rect x="2" y="0" width="1" height="1" fill="#111"/><rect x="1" y="1" width="3" height="1" fill="#111"/><rect x="0" y="2" width="5" height="1" fill="#111"/><rect x="0" y="3" width="5" height="1" fill="#e8e8f4"/><rect x="0" y="3.5" width="5" height="0" fill="#111"/><rect x="1" y="4" width="3" height="1" fill="#111"/><rect x="2" y="5" width="1" height="1" fill="#111"/></svg>
<svg class="a" style="left:676px;top:263px" width="5" height="6" viewBox="0 0 5 6" shape-rendering="crispEdges"><rect x="2" y="0" width="1" height="1" fill="#111"/><rect x="1" y="1" width="3" height="1" fill="#111"/><rect x="0" y="2" width="5" height="1" fill="#111"/><rect x="0" y="3" width="5" height="1" fill="#e8e8f4"/><rect x="0" y="3.5" width="5" height="0" fill="#111"/><rect x="1" y="4" width="3" height="1" fill="#111"/><rect x="2" y="5" width="1" height="1" fill="#111"/></svg>
<svg class="a" style="left:754px;top:263px" width="5" height="6" viewBox="0 0 5 6" shape-rendering="crispEdges"><rect x="2" y="0" width="1" height="1" fill="#111"/><rect x="1" y="1" width="3" height="1" fill="#111"/><rect x="0" y="2" width="5" height="1" fill="#111"/><rect x="0" y="3" width="5" height="1" fill="#e8e8f4"/><rect x="0" y="3.5" width="5" height="0" fill="#111"/><rect x="1" y="4" width="3" height="1" fill="#111"/><rect x="2" y="5" width="1" height="1" fill="#111"/></svg>
<svg class="a" style="left:832px;top:263px" width="5" height="6" viewBox="0 0 5 6" shape-rendering="crispEdges"><rect x="2" y="0" width="1" height="1" fill="#111"/><rect x="1" y="1" width="3" height="1" fill="#111"/><rect x="0" y="2" width="5" height="1" fill="#111"/><rect x="0" y="3" width="5" height="1" fill="#e8e8f4"/><rect x="0" y="3.5" width="5" height="0" fill="#111"/><rect x="1" y="4" width="3" height="1" fill="#111"/><rect x="2" y="5" width="1" height="1" fill="#111"/></svg>
<svg class="a" style="left:78px;top:272.5px" width="11" height="11" viewBox="0 0 11 11"><path d="M5.4 5.4 L9.4 9.4" stroke="#15153a" stroke-width="2.4" stroke-linecap="round"/><path d="M5.6 5.6 L9.2 9.2" stroke="#2040ff" stroke-width="1.2" stroke-linecap="round"/><circle cx="3.6" cy="3.6" r="2.6" fill="#cfcfc8" stroke="#2e2e3a" stroke-width="0.8"/><circle cx="3.3" cy="3.3" r="1.2" fill="#f6f6f0"/></svg>
<svg class="a" style="left:157px;top:272.5px" width="11" height="11" viewBox="0 0 11 11"><path d="M5.4 5.4 L9.4 9.4" stroke="#15153a" stroke-width="2.4" stroke-linecap="round"/><path d="M5.6 5.6 L9.2 9.2" stroke="#2040ff" stroke-width="1.2" stroke-linecap="round"/><circle cx="3.6" cy="3.6" r="2.6" fill="#cfcfc8" stroke="#2e2e3a" stroke-width="0.8"/><circle cx="3.3" cy="3.3" r="1.2" fill="#f6f6f0"/></svg>
<svg class="a" style="left:168px;top:272.5px" width="11" height="11" viewBox="0 0 11 11"><path d="M5.4 5.4 L9.4 9.4" stroke="#15153a" stroke-width="2.4" stroke-linecap="round"/><path d="M5.6 5.6 L9.2 9.2" stroke="#2040ff" stroke-width="1.2" stroke-linecap="round"/><circle cx="3.6" cy="3.6" r="2.6" fill="#cfcfc8" stroke="#2e2e3a" stroke-width="0.8"/><circle cx="3.3" cy="3.3" r="1.2" fill="#f6f6f0"/></svg>
<svg class="a" style="left:216px;top:272.5px" width="11" height="11" viewBox="0 0 11 11"><path d="M5.4 5.4 L9.4 9.4" stroke="#15153a" stroke-width="2.4" stroke-linecap="round"/><path d="M5.6 5.6 L9.2 9.2" stroke="#2040ff" stroke-width="1.2" stroke-linecap="round"/><circle cx="3.6" cy="3.6" r="2.6" fill="#cfcfc8" stroke="#2e2e3a" stroke-width="0.8"/><circle cx="3.3" cy="3.3" r="1.2" fill="#f6f6f0"/></svg>
<svg class="a" style="left:264px;top:272.5px" width="11" height="11" viewBox="0 0 11 11"><path d="M5.4 5.4 L9.4 9.4" stroke="#15153a" stroke-width="2.4" stroke-linecap="round"/><path d="M5.6 5.6 L9.2 9.2" stroke="#2040ff" stroke-width="1.2" stroke-linecap="round"/><circle cx="3.6" cy="3.6" r="2.6" fill="#cfcfc8" stroke="#2e2e3a" stroke-width="0.8"/><circle cx="3.3" cy="3.3" r="1.2" fill="#f6f6f0"/></svg>
<svg class="a" style="left:311px;top:272.5px" width="11" height="11" viewBox="0 0 11 11"><path d="M5.4 5.4 L9.4 9.4" stroke="#15153a" stroke-width="2.4" stroke-linecap="round"/><path d="M5.6 5.6 L9.2 9.2" stroke="#2040ff" stroke-width="1.2" stroke-linecap="round"/><circle cx="3.6" cy="3.6" r="2.6" fill="#cfcfc8" stroke="#2e2e3a" stroke-width="0.8"/><circle cx="3.3" cy="3.3" r="1.2" fill="#f6f6f0"/></svg>
<svg class="a" style="left:351px;top:272.5px" width="11" height="11" viewBox="0 0 11 11"><path d="M5.4 5.4 L9.4 9.4" stroke="#15153a" stroke-width="2.4" stroke-linecap="round"/><path d="M5.6 5.6 L9.2 9.2" stroke="#2040ff" stroke-width="1.2" stroke-linecap="round"/><circle cx="3.6" cy="3.6" r="2.6" fill="#cfcfc8" stroke="#2e2e3a" stroke-width="0.8"/><circle cx="3.3" cy="3.3" r="1.2" fill="#f6f6f0"/></svg>
<svg class="a" style="left:430px;top:272.5px" width="11" height="11" viewBox="0 0 11 11"><path d="M5.4 5.4 L9.4 9.4" stroke="#15153a" stroke-width="2.4" stroke-linecap="round"/><path d="M5.6 5.6 L9.2 9.2" stroke="#2040ff" stroke-width="1.2" stroke-linecap="round"/><circle cx="3.6" cy="3.6" r="2.6" fill="#cfcfc8" stroke="#2e2e3a" stroke-width="0.8"/><circle cx="3.3" cy="3.3" r="1.2" fill="#f6f6f0"/></svg>
<svg class="a" style="left:509px;top:272.5px" width="11" height="11" viewBox="0 0 11 11"><path d="M5.4 5.4 L9.4 9.4" stroke="#15153a" stroke-width="2.4" stroke-linecap="round"/><path d="M5.6 5.6 L9.2 9.2" stroke="#2040ff" stroke-width="1.2" stroke-linecap="round"/><circle cx="3.6" cy="3.6" r="2.6" fill="#cfcfc8" stroke="#2e2e3a" stroke-width="0.8"/><circle cx="3.3" cy="3.3" r="1.2" fill="#f6f6f0"/></svg>
<svg class="a" style="left:587px;top:272.5px" width="11" height="11" viewBox="0 0 11 11"><path d="M5.4 5.4 L9.4 9.4" stroke="#15153a" stroke-width="2.4" stroke-linecap="round"/><path d="M5.6 5.6 L9.2 9.2" stroke="#2040ff" stroke-width="1.2" stroke-linecap="round"/><circle cx="3.6" cy="3.6" r="2.6" fill="#cfcfc8" stroke="#2e2e3a" stroke-width="0.8"/><circle cx="3.3" cy="3.3" r="1.2" fill="#f6f6f0"/></svg>
<svg class="a" style="left:667px;top:272.5px" width="11" height="11" viewBox="0 0 11 11"><path d="M5.4 5.4 L9.4 9.4" stroke="#15153a" stroke-width="2.4" stroke-linecap="round"/><path d="M5.6 5.6 L9.2 9.2" stroke="#2040ff" stroke-width="1.2" stroke-linecap="round"/><circle cx="3.6" cy="3.6" r="2.6" fill="#cfcfc8" stroke="#2e2e3a" stroke-width="0.8"/><circle cx="3.3" cy="3.3" r="1.2" fill="#f6f6f0"/></svg>
<svg class="a" style="left:745px;top:272.5px" width="11" height="11" viewBox="0 0 11 11"><path d="M5.4 5.4 L9.4 9.4" stroke="#15153a" stroke-width="2.4" stroke-linecap="round"/><path d="M5.6 5.6 L9.2 9.2" stroke="#2040ff" stroke-width="1.2" stroke-linecap="round"/><circle cx="3.6" cy="3.6" r="2.6" fill="#cfcfc8" stroke="#2e2e3a" stroke-width="0.8"/><circle cx="3.3" cy="3.3" r="1.2" fill="#f6f6f0"/></svg>
<svg class="a" style="left:823px;top:272.5px" width="11" height="11" viewBox="0 0 11 11"><path d="M5.4 5.4 L9.4 9.4" stroke="#15153a" stroke-width="2.4" stroke-linecap="round"/><path d="M5.6 5.6 L9.2 9.2" stroke="#2040ff" stroke-width="1.2" stroke-linecap="round"/><circle cx="3.6" cy="3.6" r="2.6" fill="#cfcfc8" stroke="#2e2e3a" stroke-width="0.8"/><circle cx="3.3" cy="3.3" r="1.2" fill="#f6f6f0"/></svg>
<svg class="a" style="left:902px;top:272.5px" width="11" height="11" viewBox="0 0 11 11"><path d="M5.4 5.4 L9.4 9.4" stroke="#15153a" stroke-width="2.4" stroke-linecap="round"/><path d="M5.6 5.6 L9.2 9.2" stroke="#2040ff" stroke-width="1.2" stroke-linecap="round"/><circle cx="3.6" cy="3.6" r="2.6" fill="#cfcfc8" stroke="#2e2e3a" stroke-width="0.8"/><circle cx="3.3" cy="3.3" r="1.2" fill="#f6f6f0"/></svg>
<svg class="a" style="left:913px;top:271px" width="8" height="10" viewBox="0 0 8 10"><path d="M0.5 1.5 L0.5 0.5 L6.5 0.5" fill="none" stroke="#111" stroke-width="1"/><rect x="1.5" y="2.5" width="6" height="7" rx="0.8" fill="#8c9ce8" stroke="#111" stroke-width="1"/><rect x="3.6" y="3.5" width="1.8" height="5" fill="#c8d0ff"/></svg>
<div class="a" style="left:11px;top:291px;width:900px;height:253px;overflow:hidden">
<div class="row" style="top:0px;height:15px;background:#808080;border-bottom:1px solid #9a9a9a">
<div class="c r" style="left:0px;width:35px;color:#ffffff;padding-top:1px;border-left:0 solid #c0c0c0">114</div>
<div class="c" style="left:35px;width:41px;color:#ffffff;padding-top:1px;border-left:1px solid #c0c0c0"><span class="u" style="transform:scaleX(0.94)">ADD2</span></div>
<div class="c" style="left:76px;width:79px;color:#ffffff;padding-top:1px;border-left:1px solid #c0c0c0">08867000</div>
<div class="c" style="left:155px;width:11px;color:#ffffff;padding-top:1px;border-left:1px solid #c0c0c0">PF</div>
<div class="c r" style="left:166px;width:48px;color:#ffffff;padding-top:1px;border-left:1px solid #c0c0c0">0.500</div>
<div class="c r" style="left:214px;width:48px;color:#ffffff;padding-top:1px;border-left:1px solid #c0c0c0">0.20</div>
<div class="c r" style="left:262px;width:47px;color:#ffffff;padding-top:1px;border-left:1px solid #c0c0c0">0.50</div>
<div class="c" style="left:309px;width:40px;color:#ffffff;padding-top:1px;border-left:1px solid #c0c0c0"></div>
<div class="c r" style="left:349px;width:79px;color:#ffffff;padding-top:1px;border-left:1px solid #c0c0c0">0.00</div>
<div class="c r" style="left:428px;width:79px;color:#ffffff;padding-top:1px;border-left:1px solid #c0c0c0">0.00</div>
<div class="c r" style="left:507px;width:78px;color:#ffffff;padding-top:1px;border-left:1px solid #c0c0c0">0.00</div>
<div class="c r" style="left:585px;width:80px;color:#ffffff;padding-top:1px;border-left:1px solid #c0c0c0">0.00</div>
<div class="c r" style="left:665px;width:78px;color:#ffffff;padding-top:1px;border-left:1px solid #c0c0c0">0.00</div>
<div class="c r" style="left:743px;width:78px;color:#ffffff;padding-top:1px;border-left:1px solid #c0c0c0">0.00</div>
<div class="c r" style="left:821px;width:79px;color:#ffffff;padding-top:1px;border-left:1px solid #c0c0c0">0.00</div>
</div>
<div class="row" style="top:15px;height:16px;background:#fefee8;border-bottom:1px solid #e4e8ec">
<div class="c r" style="left:0px;width:35px;color:#000;padding-top:1px;border-left:0 solid #dde1e6">116</div>
<div class="c" style="left:35px;width:41px;color:#000;padding-top:1px;border-left:1px solid #dde1e6"><span class="u" style="transform:scaleX(0.94)">ADD2</span></div>
<div class="c" style="left:76px;width:79px;color:#000;padding-top:1px;border-left:1px solid #dde1e6">02162000</div>
<div class="c" style="left:155px;width:11px;color:#000;padding-top:1px;border-left:1px solid #dde1e6">PF</div>
<div class="c r" style="left:166px;width:48px;color:#000;padding-top:1px;border-left:1px solid #dde1e6">0.200</div>
<div class="c r" style="left:214px;width:48px;color:#000;padding-top:1px;border-left:1px solid #dde1e6">0.20</div>
<div class="c r" style="left:262px;width:47px;color:#000;padding-top:1px;border-left:1px solid #dde1e6">0.50</div>
<div class="c" style="left:309px;width:40px;color:#000;padding-top:1px;border-left:1px solid #dde1e6"></div>
<div class="c r" style="left:349px;width:79px;color:#000;padding-top:1px;border-left:1px solid #dde1e6">0.00</div>
<div class="c r" style="left:428px;width:79px;color:#000;padding-top:1px;border-left:1px solid #dde1e6">0.00</div>
<div class="c r" style="left:507px;width:78px;color:#000;padding-top:1px;border-left:1px solid #dde1e6">0.00</div>
<div class="c r" style="left:585px;width:80px;color:#000;padding-top:1px;border-left:1px solid #dde1e6">0.00</div>
<div class="c r" style="left:665px;width:78px;color:#000;padding-top:1px;border-left:1px solid #dde1e6">0.00</div>
<div class="c r" style="left:743px;width:78px;color:#000;padding-top:1px;border-left:1px solid #dde1e6">0.00</div>
<div class="c r" style="left:821px;width:79px;color:#000;padding-top:1px;border-left:1px solid #dde1e6">0.00</div>
</div>
<div class="row" style="top:31px;height:15px;background:#f0f6fd;border-bottom:1px solid #e4e8ec">
<div class="c r" style="left:0px;width:35px;color:#000;padding-top:0px;border-left:0 solid #dde1e6">117</div>
<div class="c" style="left:35px;width:41px;color:#fff8e0;padding-top:0px;background:#ffc000;border-left:1px solid #dde1e6"><span class="u" style="transform:scaleX(0.94)">ADD2</span></div>
<div class="c" style="left:76px;width:79px;color:#000;padding-top:0px;border-left:1px solid #dde1e6">02355000</div>
<div class="c" style="left:155px;width:11px;color:#000;padding-top:0px;border-left:1px solid #dde1e6">PF</div>
<div class="c r" style="left:166px;width:48px;color:#000;padding-top:0px;border-left:1px solid #dde1e6">0.200</div>
<div class="c r" style="left:214px;width:48px;color:#000;padding-top:0px;border-left:1px solid #dde1e6">0.20</div>
<div class="c r" style="left:262px;width:47px;color:#000;padding-top:0px;border-left:1px solid #dde1e6">0.50</div>
<div class="c" style="left:309px;width:40px;color:#000;padding-top:0px;border-left:1px solid #dde1e6"></div>
<div class="c r" style="left:349px;width:79px;color:#000;padding-top:0px;border-left:1px solid #dde1e6">0.00</div>
<div class="c r" style="left:428px;width:79px;color:#000;padding-top:0px;border-left:1px solid #dde1e6">0.00</div>
<div class="c r" style="left:507px;width:78px;color:#000;padding-top:0px;border-left:1px solid #dde1e6">0.00</div>
<div class="c r" style="left:585px;width:80px;color:#000;padding-top:0px;border-left:1px solid #dde1e6">0.00</div>
<div class="c r" style="left:665px;width:78px;color:#000;padding-top:0px;border-left:1px solid #dde1e6">0.00</div>
<div class="c r" style="left:743px;width:78px;color:#000;padding-top:0px;border-left:1px solid #dde1e6">0.00</div>
<div class="c r" style="left:821px;width:79px;color:#000;padding-top:0px;border-left:1px solid #dde1e6">0.00</div>
</div>
<div class="row" style="top:46px;height:15px;background:#fefee8;border-bottom:1px solid #e4e8ec">
<div class="c r" style="left:0px;width:35px;color:#000;padding-top:0px;border-left:0 solid #dde1e6">108</div>
<div class="c" style="left:35px;width:41px;color:#fff8e0;padding-top:0px;background:#ffc000;border-left:1px solid #dde1e6"><span class="u" style="transform:scaleX(0.94)">MEL</span></div>
<div class="c" style="left:76px;width:79px;color:#000;padding-top:0px;border-left:1px solid #dde1e6">01676000</div>
<div class="c" style="left:155px;width:11px;color:#000;padding-top:0px;border-left:1px solid #dde1e6">EL</div>
<div class="c r" style="left:166px;width:48px;color:#000;padding-top:0px;border-left:1px solid #dde1e6">4.000</div>
<div class="c r" style="left:214px;width:48px;color:#000;padding-top:0px;border-left:1px solid #dde1e6">2.00</div>
<div class="c r" style="left:262px;width:47px;color:#000;padding-top:0px;border-left:1px solid #dde1e6">2.00</div>
<div class="c" style="left:309px;width:40px;color:#000;padding-top:0px;border-left:1px solid #dde1e6"></div>
<div class="c r" style="left:349px;width:79px;color:#000;padding-top:0px;border-left:1px solid #dde1e6">0.00</div>
<div class="c r" style="left:428px;width:79px;color:#000;padding-top:0px;border-left:1px solid #dde1e6">0.00</div>
<div class="c r" style="left:507px;width:78px;color:#000;padding-top:0px;border-left:1px solid #dde1e6">0.00</div>
<div class="c r" style="left:585px;width:80px;color:#000;padding-top:0px;border-left:1px solid #dde1e6">0.00</div>
<div class="c r" style="left:665px;width:78px;color:#000;padding-top:0px;border-left:1px solid #dde1e6">0.00</div>
<div class="c r" style="left:743px;width:78px;color:#000;padding-top:0px;border-left:1px solid #dde1e6">0.00</div>
<div class="c r" style="left:821px;width:79px;color:#000;padding-top:0px;border-left:1px solid #dde1e6">0.00</div>
</div>
<div class="row" style="top:61px;height:15px;background:#f0f6fd;border-bottom:1px solid #e4e8ec">
<div class="c r" style="left:0px;width:35px;color:#000;padding-top:1px;border-left:0 solid #dde1e6">113</div>
<div class="c" style="left:35px;width:41px;color:#fff8e0;padding-top:1px;background:#ffc000;border-left:1px solid #dde1e6"><span class="u" style="transform:scaleX(0.94)">MLS</span></div>
<div class="c" style="left:76px;width:79px;color:#000;padding-top:1px;border-left:1px solid #dde1e6">01667200</div>
<div class="c" style="left:155px;width:11px;color:#000;padding-top:1px;border-left:1px solid #dde1e6">GL</div>
<div class="c r" style="left:166px;width:48px;color:#000;padding-top:1px;border-left:1px solid #dde1e6">1.520</div>
<div class="c r" style="left:214px;width:48px;color:#000;padding-top:1px;border-left:1px solid #dde1e6">5.00</div>
<div class="c r" style="left:262px;width:47px;color:#000;padding-top:1px;border-left:1px solid #dde1e6">5.00</div>
<div class="c" style="left:309px;width:40px;color:#000;padding-top:1px;border-left:1px solid #dde1e6"></div>
<div class="c r" style="left:349px;width:79px;color:#000;padding-top:1px;border-left:1px solid #dde1e6">0.00</div>
<div class="c r" style="left:428px;width:79px;color:#000;padding-top:1px;border-left:1px solid #dde1e6">0.00</div>
<div class="c r" style="left:507px;width:78px;color:#000;padding-top:1px;border-left:1px solid #dde1e6">0.00</div>
<div class="c r" style="left:585px;width:80px;color:#000;padding-top:1px;border-left:1px solid #dde1e6">0.00</div>
<div class="c r" style="left:665px;width:78px;color:#000;padding-top:1px;border-left:1px solid #dde1e6">0.00</div>
<div class="c r" style="left:743px;width:78px;color:#000;padding-top:1px;border-left:1px solid #dde1e6">0.00</div>
<div class="c r" style="left:821px;width:79px;color:#000;padding-top:1px;border-left:1px solid #dde1e6">0.00</div>
</div>
<div class="row" style="top:76px;height:16px;background:#fefee8;border-bottom:1px solid #e4e8ec">
<div class="c r" style="left:0px;width:35px;color:#000;padding-top:1px;border-left:0 solid #dde1e6">101</div>
<div class="c" style="left:35px;width:41px;color:#fff8e0;padding-top:1px;background:#ffc000;border-left:1px solid #dde1e6"><span class="u" style="transform:scaleX(0.94)">P1B</span></div>
<div class="c" style="left:76px;width:79px;color:#000;padding-top:1px;border-left:1px solid #dde1e6">01560000</div>
<div class="c" style="left:155px;width:11px;color:#000;padding-top:1px;border-left:1px solid #dde1e6">TX</div>
<div class="c r" style="left:166px;width:48px;color:#000;padding-top:1px;border-left:1px solid #dde1e6">13.000</div>
<div class="c r" style="left:214px;width:48px;color:#000;padding-top:1px;border-left:1px solid #dde1e6">5.00</div>
<div class="c r" style="left:262px;width:47px;color:#000;padding-top:1px;border-left:1px solid #dde1e6">2.00</div>
<div class="c" style="left:309px;width:40px;color:#000;padding-top:1px;border-left:1px solid #dde1e6">005</div>
<div class="c r" style="left:349px;width:79px;color:#000;padding-top:1px;border-left:1px solid #dde1e6">12.00</div>
<div class="c r" style="left:428px;width:79px;color:#000;padding-top:1px;border-left:1px solid #dde1e6">0.00</div>
<div class="c r" style="left:507px;width:78px;color:#000;padding-top:1px;border-left:1px solid #dde1e6">0.00</div>
<div class="c r" style="left:585px;width:80px;color:#000;padding-top:1px;border-left:1px solid #dde1e6">0.00</div>
<div class="c r" style="left:665px;width:78px;color:#000;padding-top:1px;border-left:1px solid #dde1e6">0.00</div>
<div class="c r" style="left:743px;width:78px;color:#000;padding-top:1px;border-left:1px solid #dde1e6">0.00</div>
<div class="c r" style="left:821px;width:79px;color:#000;padding-top:1px;border-left:1px solid #dde1e6">0.00</div>
</div>
<div class="row" style="top:92px;height:15px;background:#f0f6fd;border-bottom:1px solid #e4e8ec">
<div class="c r" style="left:0px;width:35px;color:#000;padding-top:0px;border-left:0 solid #dde1e6">104</div>
<div class="c" style="left:35px;width:41px;color:#fff8e0;padding-top:0px;background:#ffc000;border-left:1px solid #dde1e6"><span class="u" style="transform:scaleX(0.94)">P1B</span></div>
<div class="c" style="left:76px;width:79px;color:#000;padding-top:0px;border-left:1px solid #dde1e6">01652000</div>
<div class="c" style="left:155px;width:11px;color:#000;padding-top:0px;border-left:1px solid #dde1e6">RA</div>
<div class="c r" style="left:166px;width:48px;color:#000;padding-top:0px;border-left:1px solid #dde1e6">6.896</div>
<div class="c r" style="left:214px;width:48px;color:#000;padding-top:0px;border-left:1px solid #dde1e6">5.00</div>
<div class="c r" style="left:262px;width:47px;color:#000;padding-top:0px;border-left:1px solid #dde1e6">5.00</div>
<div class="c" style="left:309px;width:40px;color:#000;padding-top:0px;border-left:1px solid #dde1e6">011</div>
<div class="c r" style="left:349px;width:79px;color:#000;padding-top:0px;border-left:1px solid #dde1e6">9.29</div>
<div class="c r" style="left:428px;width:79px;color:#000;padding-top:0px;border-left:1px solid #dde1e6">0.00</div>
<div class="c r" style="left:507px;width:78px;color:#000;padding-top:0px;border-left:1px solid #dde1e6">0.00</div>
<div class="c r" style="left:585px;width:80px;color:#000;padding-top:0px;border-left:1px solid #dde1e6">0.00</div>
<div class="c r" style="left:665px;width:78px;color:#000;padding-top:0px;border-left:1px solid #dde1e6">0.00</div>
<div class="c r" style="left:743px;width:78px;color:#000;padding-top:0px;border-left:1px solid #dde1e6">0.00</div>
<div class="c r" style="left:821px;width:79px;color:#000;padding-top:0px;border-left:1px solid #dde1e6">0.00</div>
</div>
<div class="row" style="top:107px;height:15px;background:#fefee8;border-bottom:1px solid #e4e8ec">
<div class="c r" style="left:0px;width:35px;color:#000;padding-top:0px;border-left:0 solid #dde1e6">107</div>
<div class="c" style="left:35px;width:41px;color:#fff8e0;padding-top:0px;background:#ffc000;border-left:1px solid #dde1e6"><span class="u" style="transform:scaleX(0.94)">P1B</span></div>
<div class="c" style="left:76px;width:79px;color:#000;padding-top:0px;border-left:1px solid #dde1e6">01417300</div>
<div class="c" style="left:155px;width:11px;color:#000;padding-top:0px;border-left:1px solid #dde1e6">NU</div>
<div class="c r" style="left:166px;width:48px;color:#000;padding-top:0px;border-left:1px solid #dde1e6">4.100</div>
<div class="c r" style="left:214px;width:48px;color:#000;padding-top:0px;border-left:1px solid #dde1e6">5.00</div>
<div class="c r" style="left:262px;width:47px;color:#000;padding-top:0px;border-left:1px solid #dde1e6">0.40</div>
<div class="c" style="left:309px;width:40px;color:#000;padding-top:0px;border-left:1px solid #dde1e6">004</div>
<div class="c r" style="left:349px;width:79px;color:#000;padding-top:0px;border-left:1px solid #dde1e6">9.98</div>
<div class="c r" style="left:428px;width:79px;color:#000;padding-top:0px;border-left:1px solid #dde1e6">0.00</div>
<div class="c r" style="left:507px;width:78px;color:#000;padding-top:0px;border-left:1px solid #dde1e6">0.00</div>
<div class="c r" style="left:585px;width:80px;color:#000;padding-top:0px;border-left:1px solid #dde1e6">0.00</div>
<div class="c r" style="left:665px;width:78px;color:#000;padding-top:0px;border-left:1px solid #dde1e6">0.00</div>
<div class="c r" style="left:743px;width:78px;color:#000;padding-top:0px;border-left:1px solid #dde1e6">0.00</div>
<div class="c r" style="left:821px;width:79px;color:#000;padding-top:0px;border-left:1px solid #dde1e6">0.00</div>
</div>
<div class="row" style="top:122px;height:15px;background:#f0f6fd;border-bottom:1px solid #e4e8ec">
<div class="c r" style="left:0px;width:35px;color:#000;padding-top:1px;border-left:0 solid #dde1e6">112</div>
<div class="c" style="left:35px;width:41px;color:#fff8e0;padding-top:1px;background:#ffc000;border-left:1px solid #dde1e6"><span class="u" style="transform:scaleX(0.94)">P1B</span></div>
<div class="c" style="left:76px;width:79px;color:#000;padding-top:1px;border-left:1px solid #dde1e6">01582000</div>
<div class="c" style="left:155px;width:11px;color:#000;padding-top:1px;border-left:1px solid #dde1e6">CC</div>
<div class="c r" style="left:166px;width:48px;color:#000;padding-top:1px;border-left:1px solid #dde1e6">1.709</div>
<div class="c r" style="left:214px;width:48px;color:#000;padding-top:1px;border-left:1px solid #dde1e6">5.00</div>
<div class="c r" style="left:262px;width:47px;color:#000;padding-top:1px;border-left:1px solid #dde1e6">0.40</div>
<div class="c" style="left:309px;width:40px;color:#000;padding-top:1px;border-left:1px solid #dde1e6">001</div>
<div class="c r" style="left:349px;width:79px;color:#000;padding-top:1px;border-left:1px solid #dde1e6">7.95</div>
<div class="c r" style="left:428px;width:79px;color:#000;padding-top:1px;border-left:1px solid #dde1e6">0.00</div>
<div class="c r" style="left:507px;width:78px;color:#000;padding-top:1px;border-left:1px solid #dde1e6">0.00</div>
<div class="c r" style="left:585px;width:80px;color:#000;padding-top:1px;border-left:1px solid #dde1e6">0.00</div>
<div class="c r" style="left:665px;width:78px;color:#000;padding-top:1px;border-left:1px solid #dde1e6">0.00</div>
<div class="c r" style="left:743px;width:78px;color:#000;padding-top:1px;border-left:1px solid #dde1e6">0.00</div>
<div class="c r" style="left:821px;width:79px;color:#000;padding-top:1px;border-left:1px solid #dde1e6">0.00</div>
</div>
<div class="row" style="top:137px;height:16px;background:#fefee8;border-bottom:1px solid #e4e8ec">
<div class="c r" style="left:0px;width:35px;color:#000;padding-top:1px;border-left:0 solid #dde1e6">100</div>
<div class="c" style="left:35px;width:41px;color:#fff8e0;padding-top:1px;background:#ffc000;border-left:1px solid #dde1e6"><span class="u" style="transform:scaleX(0.94)">P2B</span></div>
<div class="c" style="left:76px;width:79px;color:#000;padding-top:1px;border-left:1px solid #dde1e6">01375000</div>
<div class="c" style="left:155px;width:11px;color:#000;padding-top:1px;border-left:1px solid #dde1e6">MA</div>
<div class="c r" style="left:166px;width:48px;color:#000;padding-top:1px;border-left:1px solid #dde1e6">29.980</div>
<div class="c r" style="left:214px;width:48px;color:#000;padding-top:1px;border-left:1px solid #dde1e6">5.00</div>
<div class="c r" style="left:262px;width:47px;color:#000;padding-top:1px;border-left:1px solid #dde1e6">3.00</div>
<div class="c" style="left:309px;width:40px;color:#000;padding-top:1px;border-left:1px solid #dde1e6">019</div>
<div class="c r" style="left:349px;width:79px;color:#000;padding-top:1px;border-left:1px solid #dde1e6">12.38</div>
<div class="c r" style="left:428px;width:79px;color:#000;padding-top:1px;border-left:1px solid #dde1e6">0.00</div>
<div class="c r" style="left:507px;width:78px;color:#000;padding-top:1px;border-left:1px solid #dde1e6">0.00</div>
<div class="c r" style="left:585px;width:80px;color:#000;padding-top:1px;border-left:1px solid #dde1e6">0.00</div>
<div class="c r" style="left:665px;width:78px;color:#000;padding-top:1px;border-left:1px solid #dde1e6">0.00</div>
<div class="c r" style="left:743px;width:78px;color:#000;padding-top:1px;border-left:1px solid #dde1e6">0.00</div>
<div class="c r" style="left:821px;width:79px;color:#000;padding-top:1px;border-left:1px solid #dde1e6">0.00</div>
</div>
<div class="row" style="top:153px;height:15px;background:#f0f6fd;border-bottom:1px solid #e4e8ec">
<div class="c r" style="left:0px;width:35px;color:#000;padding-top:0px;border-left:0 solid #dde1e6">103</div>
<div class="c" style="left:35px;width:41px;color:#fff8e0;padding-top:0px;background:#ffc000;border-left:1px solid #dde1e6"><span class="u" style="transform:scaleX(0.94)">P2B</span></div>
<div class="c" style="left:76px;width:79px;color:#000;padding-top:0px;border-left:1px solid #dde1e6">01658000</div>
<div class="c" style="left:155px;width:11px;color:#000;padding-top:0px;border-left:1px solid #dde1e6">PU</div>
<div class="c r" style="left:166px;width:48px;color:#000;padding-top:0px;border-left:1px solid #dde1e6">9.000</div>
<div class="c r" style="left:214px;width:48px;color:#000;padding-top:0px;border-left:1px solid #dde1e6">5.00</div>
<div class="c r" style="left:262px;width:47px;color:#000;padding-top:0px;border-left:1px solid #dde1e6">3.00</div>
<div class="c" style="left:309px;width:40px;color:#000;padding-top:0px;border-left:1px solid #dde1e6">014</div>
<div class="c r" style="left:349px;width:79px;color:#000;padding-top:0px;border-left:1px solid #dde1e6">9.07</div>
<div class="c r" style="left:428px;width:79px;color:#000;padding-top:0px;border-left:1px solid #dde1e6">0.00</div>
<div class="c r" style="left:507px;width:78px;color:#000;padding-top:0px;border-left:1px solid #dde1e6">0.00</div>
<div class="c r" style="left:585px;width:80px;color:#000;padding-top:0px;border-left:1px solid #dde1e6">0.00</div>
<div class="c r" style="left:665px;width:78px;color:#000;padding-top:0px;border-left:1px solid #dde1e6">0.00</div>
<div class="c r" style="left:743px;width:78px;color:#000;padding-top:0px;border-left:1px solid #dde1e6">0.00</div>
<div class="c r" style="left:821px;width:79px;color:#000;padding-top:0px;border-left:1px solid #dde1e6">0.00</div>
</div>
<div class="row" style="top:168px;height:15px;background:#fefee8;border-bottom:1px solid #e4e8ec">
<div class="c r" style="left:0px;width:35px;color:#000;padding-top:0px;border-left:0 solid #dde1e6">105</div>
<div class="c" style="left:35px;width:41px;color:#fff8e0;padding-top:0px;background:#ffc000;border-left:1px solid #dde1e6"><span class="u" style="transform:scaleX(0.94)">P2B</span></div>
<div class="c" style="left:76px;width:79px;color:#000;padding-top:0px;border-left:1px solid #dde1e6">01331000</div>
<div class="c" style="left:155px;width:11px;color:#000;padding-top:0px;border-left:1px solid #dde1e6">OF</div>
<div class="c r" style="left:166px;width:48px;color:#000;padding-top:0px;border-left:1px solid #dde1e6">5.000</div>
<div class="c r" style="left:214px;width:48px;color:#000;padding-top:0px;border-left:1px solid #dde1e6">5.00</div>
<div class="c r" style="left:262px;width:47px;color:#000;padding-top:0px;border-left:1px solid #dde1e6">0.40</div>
<div class="c" style="left:309px;width:40px;color:#000;padding-top:0px;border-left:1px solid #dde1e6">016</div>
<div class="c r" style="left:349px;width:79px;color:#000;padding-top:0px;border-left:1px solid #dde1e6">11.26</div>
<div class="c r" style="left:428px;width:79px;color:#000;padding-top:0px;border-left:1px solid #dde1e6">0.00</div>
<div class="c r" style="left:507px;width:78px;color:#000;padding-top:0px;border-left:1px solid #dde1e6">0.00</div>
<div class="c r" style="left:585px;width:80px;color:#000;padding-top:0px;border-left:1px solid #dde1e6">0.00</div>
<div class="c r" style="left:665px;width:78px;color:#000;padding-top:0px;border-left:1px solid #dde1e6">0.00</div>
<div class="c r" style="left:743px;width:78px;color:#000;padding-top:0px;border-left:1px solid #dde1e6">0.00</div>
<div class="c r" style="left:821px;width:79px;color:#000;padding-top:0px;border-left:1px solid #dde1e6">0.00</div>
</div>
<div class="row" style="top:183px;height:15px;background:#f0f6fd;border-bottom:1px solid #e4e8ec">
<div class="c r" style="left:0px;width:35px;color:#000;padding-top:1px;border-left:0 solid #dde1e6">109</div>
<div class="c" style="left:35px;width:41px;color:#fff8e0;padding-top:1px;background:#ffc000;border-left:1px solid #dde1e6"><span class="u" style="transform:scaleX(0.94)">P2B</span></div>
<div class="c" style="left:76px;width:79px;color:#000;padding-top:1px;border-left:1px solid #dde1e6">01505000</div>
<div class="c" style="left:155px;width:11px;color:#000;padding-top:1px;border-left:1px solid #dde1e6">AL</div>
<div class="c r" style="left:166px;width:48px;color:#000;padding-top:1px;border-left:1px solid #dde1e6">3.969</div>
<div class="c r" style="left:214px;width:48px;color:#000;padding-top:1px;border-left:1px solid #dde1e6">5.00</div>
<div class="c r" style="left:262px;width:47px;color:#000;padding-top:1px;border-left:1px solid #dde1e6">0.40</div>
<div class="c" style="left:309px;width:40px;color:#000;padding-top:1px;border-left:1px solid #dde1e6">018</div>
<div class="c r" style="left:349px;width:79px;color:#000;padding-top:1px;border-left:1px solid #dde1e6">8.07</div>
<div class="c r" style="left:428px;width:79px;color:#000;padding-top:1px;border-left:1px solid #dde1e6">0.00</div>
<div class="c r" style="left:507px;width:78px;color:#000;padding-top:1px;border-left:1px solid #dde1e6">0.00</div>
<div class="c r" style="left:585px;width:80px;color:#000;padding-top:1px;border-left:1px solid #dde1e6">0.00</div>
<div class="c r" style="left:665px;width:78px;color:#000;padding-top:1px;border-left:1px solid #dde1e6">0.00</div>
<div class="c r" style="left:743px;width:78px;color:#000;padding-top:1px;border-left:1px solid #dde1e6">0.00</div>
<div class="c r" style="left:821px;width:79px;color:#000;padding-top:1px;border-left:1px solid #dde1e6">0.00</div>
</div>
<div class="row" style="top:198px;height:16px;background:#fefee8;border-bottom:1px solid #e4e8ec">
<div class="c r" style="left:0px;width:35px;color:#000;padding-top:1px;border-left:0 solid #dde1e6">110</div>
<div class="c" style="left:35px;width:41px;color:#fff8e0;padding-top:1px;background:#ffc000;border-left:1px solid #dde1e6"><span class="u" style="transform:scaleX(0.94)">P2B</span></div>
<div class="c" style="left:76px;width:79px;color:#000;padding-top:1px;border-left:1px solid #dde1e6">01644000</div>
<div class="c" style="left:155px;width:11px;color:#000;padding-top:1px;border-left:1px solid #dde1e6">CC</div>
<div class="c r" style="left:166px;width:48px;color:#000;padding-top:1px;border-left:1px solid #dde1e6">3.000</div>
<div class="c r" style="left:214px;width:48px;color:#000;padding-top:1px;border-left:1px solid #dde1e6">5.00</div>
<div class="c r" style="left:262px;width:47px;color:#000;padding-top:1px;border-left:1px solid #dde1e6">0.40</div>
<div class="c" style="left:309px;width:40px;color:#000;padding-top:1px;border-left:1px solid #dde1e6"></div>
<div class="c r" style="left:349px;width:79px;color:#000;padding-top:1px;border-left:1px solid #dde1e6">0.00</div>
<div class="c r" style="left:428px;width:79px;color:#000;padding-top:1px;border-left:1px solid #dde1e6">0.00</div>
<div class="c r" style="left:507px;width:78px;color:#000;padding-top:1px;border-left:1px solid #dde1e6">0.00</div>
<div class="c r" style="left:585px;width:80px;color:#000;padding-top:1px;border-left:1px solid #dde1e6">0.00</div>
<div class="c r" style="left:665px;width:78px;color:#000;padding-top:1px;border-left:1px solid #dde1e6">0.00</div>
<div class="c r" style="left:743px;width:78px;color:#000;padding-top:1px;border-left:1px solid #dde1e6">0.00</div>
<div class="c r" style="left:821px;width:79px;color:#000;padding-top:1px;border-left:1px solid #dde1e6">0.00</div>
</div>
<div class="row" style="top:214px;height:15px;background:#f0f6fd;border-bottom:1px solid #e4e8ec">
<div class="c r" style="left:0px;width:35px;color:#000;padding-top:0px;border-left:0 solid #dde1e6">102</div>
<div class="c" style="left:35px;width:41px;color:#fff8e0;padding-top:0px;background:#ffc000;border-left:1px solid #dde1e6"><span class="u" style="transform:scaleX(0.94)">P3B</span></div>
<div class="c" style="left:76px;width:79px;color:#000;padding-top:0px;border-left:1px solid #dde1e6">01375009</div>
<div class="c" style="left:155px;width:11px;color:#000;padding-top:0px;border-left:1px solid #dde1e6">MA</div>
<div class="c r" style="left:166px;width:48px;color:#000;padding-top:0px;border-left:1px solid #dde1e6">10.000</div>
<div class="c r" style="left:214px;width:48px;color:#000;padding-top:0px;border-left:1px solid #dde1e6">5.00</div>
<div class="c r" style="left:262px;width:47px;color:#000;padding-top:0px;border-left:1px solid #dde1e6">3.00</div>
<div class="c" style="left:309px;width:40px;color:#000;padding-top:0px;border-left:1px solid #dde1e6">034</div>
<div class="c r" style="left:349px;width:79px;color:#000;padding-top:0px;border-left:1px solid #dde1e6">7.05</div>
<div class="c r" style="left:428px;width:79px;color:#000;padding-top:0px;border-left:1px solid #dde1e6">0.00</div>
<div class="c r" style="left:507px;width:78px;color:#000;padding-top:0px;border-left:1px solid #dde1e6">0.00</div>
<div class="c r" style="left:585px;width:80px;color:#000;padding-top:0px;border-left:1px solid #dde1e6">0.00</div>
<div class="c r" style="left:665px;width:78px;color:#000;padding-top:0px;border-left:1px solid #dde1e6">0.00</div>
<div class="c r" style="left:743px;width:78px;color:#000;padding-top:0px;border-left:1px solid #dde1e6">0.00</div>
<div class="c r" style="left:821px;width:79px;color:#000;padding-top:0px;border-left:1px solid #dde1e6">0.00</div>
</div>
<div class="row" style="top:229px;height:15px;background:#fefee8;border-bottom:1px solid #e4e8ec">
<div class="c r" style="left:0px;width:35px;color:#000;padding-top:0px;border-left:0 solid #dde1e6">106</div>
<div class="c" style="left:35px;width:41px;color:#fff8e0;padding-top:0px;background:#ffc000;border-left:1px solid #dde1e6"><span class="u" style="transform:scaleX(0.94)">P3B</span></div>
<div class="c" style="left:76px;width:79px;color:#000;padding-top:0px;border-left:1px solid #dde1e6">01625000</div>
<div class="c" style="left:155px;width:11px;color:#000;padding-top:0px;border-left:1px solid #dde1e6">DF</div>
<div class="c r" style="left:166px;width:48px;color:#000;padding-top:0px;border-left:1px solid #dde1e6">4.164</div>
<div class="c r" style="left:214px;width:48px;color:#000;padding-top:0px;border-left:1px solid #dde1e6">5.00</div>
<div class="c r" style="left:262px;width:47px;color:#000;padding-top:0px;border-left:1px solid #dde1e6">7.00</div>
<div class="c" style="left:309px;width:40px;color:#000;padding-top:0px;border-left:1px solid #dde1e6">025</div>
<div class="c r" style="left:349px;width:79px;color:#000;padding-top:0px;border-left:1px solid #dde1e6">0.33</div>
<div class="c r" style="left:428px;width:79px;color:#000;padding-top:0px;border-left:1px solid #dde1e6">0.00</div>
<div class="c r" style="left:507px;width:78px;color:#000;padding-top:0px;border-left:1px solid #dde1e6">0.00</div>
<div class="c r" style="left:585px;width:80px;color:#000;padding-top:0px;border-left:1px solid #dde1e6">0.00</div>
<div class="c r" style="left:665px;width:78px;color:#000;padding-top:0px;border-left:1px solid #dde1e6">0.00</div>
<div class="c r" style="left:743px;width:78px;color:#000;padding-top:0px;border-left:1px solid #dde1e6">0.00</div>
<div class="c r" style="left:821px;width:79px;color:#000;padding-top:0px;border-left:1px solid #dde1e6">0.00</div>
</div>
<div class="row" style="top:244px;height:15px;background:#f0f6fd;border-bottom:1px solid #e4e8ec">
<div class="c r" style="left:0px;width:35px;color:#000;padding-top:0px;border-left:0 solid #dde1e6">111</div>
<div class="c" style="left:35px;width:41px;color:#fff8e0;padding-top:0px;background:#ffc000;border-left:1px solid #dde1e6"><span class="u" style="transform:scaleX(0.94)">P4F</span></div>
<div class="c" style="left:76px;width:79px;color:#000;padding-top:0px;border-left:1px solid #dde1e6">01820000</div>
<div class="c" style="left:155px;width:11px;color:#000;padding-top:0px;border-left:1px solid #dde1e6">CA</div>
<div class="c r" style="left:166px;width:48px;color:#000;padding-top:0px;border-left:1px solid #dde1e6">2.292</div>
<div class="c r" style="left:214px;width:48px;color:#000;padding-top:0px;border-left:1px solid #dde1e6">3.10</div>
<div class="c r" style="left:262px;width:47px;color:#000;padding-top:0px;border-left:1px solid #dde1e6">0.40</div>
<div class="c" style="left:309px;width:40px;color:#000;padding-top:0px;border-left:1px solid #dde1e6">037</div>
<div class="c r" style="left:349px;width:79px;color:#000;padding-top:0px;border-left:1px solid #dde1e6">0.00</div>
<div class="c r" style="left:428px;width:79px;color:#000;padding-top:0px;border-left:1px solid #dde1e6">0.00</div>
<div class="c r" style="left:507px;width:78px;color:#000;padding-top:0px;border-left:1px solid #dde1e6">0.00</div>
<div class="c r" style="left:585px;width:80px;color:#000;padding-top:0px;border-left:1px solid #dde1e6">0.00</div>
<div class="c r" style="left:665px;width:78px;color:#000;padding-top:0px;border-left:1px solid #dde1e6">0.00</div>
<div class="c r" style="left:743px;width:78px;color:#000;padding-top:0px;border-left:1px solid #dde1e6">0.00</div>
<div class="c r" style="left:821px;width:79px;color:#000;padding-top:0px;border-left:1px solid #dde1e6">0.00</div>
</div>
</div>
<div class="a" style="left:911px;top:291px;width:14px;height:253px;background:#c7d5e3"></div>
<div class="a" style="left:911px;top:504px;width:14px;height:26px;background:#e2e2e2"></div>
<svg class="a" style="left:914.5px;top:295.5px" width="7" height="4"><path d="M0 3.5 L7 3.5 L3.5 0 Z" fill="#111"/></svg>
<svg class="a" style="left:914.5px;top:534.5px" width="7" height="4"><path d="M0 0 L7 0 L3.5 3.5 Z" fill="#111"/></svg>
<div class="a" style="left:12px;top:544px;width:914px;height:31px;background:#f0f6fd;border-top:1px solid #dde1e6;border-bottom:2px solid #d3dae3"></div>
<div class="a" style="left:87px;top:544px;width:1px;height:29px;background:#dde1e6"></div>
<div class="a" style="left:166px;top:544px;width:1px;height:29px;background:#dde1e6"></div>
<div class="a" style="left:177px;top:544px;width:1px;height:29px;background:#dde1e6"></div>
<div class="a" style="left:225px;top:544px;width:1px;height:29px;background:#dde1e6"></div>
<div class="a" style="left:273px;top:544px;width:1px;height:29px;background:#dde1e6"></div>
<div class="a" style="left:320px;top:544px;width:1px;height:29px;background:#dde1e6"></div>
<div class="a" style="left:360px;top:544px;width:1px;height:29px;background:#dde1e6"></div>
<div class="a" style="left:439px;top:544px;width:1px;height:29px;background:#dde1e6"></div>
<div class="a" style="left:518px;top:544px;width:1px;height:29px;background:#dde1e6"></div>
<div class="a" style="left:596px;top:544px;width:1px;height:29px;background:#dde1e6"></div>
<div class="a" style="left:676px;top:544px;width:1px;height:29px;background:#dde1e6"></div>
<div class="a" style="left:754px;top:544px;width:1px;height:29px;background:#dde1e6"></div>
<div class="a" style="left:832px;top:544px;width:1px;height:29px;background:#dde1e6"></div>
<div class="a" style="left:911px;top:544px;width:1px;height:29px;background:#dde1e6"></div>
<div class="t" style="left:11px;top:548px;font-size:10px">Somme</div>
<div class="t" style="left:11px;top:563px;font-size:10px">Compteur</div>
<div class="t" style="left:177px;width:46px;text-align:right;top:548px;font-size:10px">99.999</div>
<div class="t" style="left:89px;top:563px;font-size:10px">18</div>
<svg class="a" style="left:904.7px;top:548.8px" width="34" height="34" viewBox="0 0 34 34">
<defs><radialGradient id="cg2" cx="0.5" cy="0.45" r="0.5"><stop offset="0" stop-color="#ffffff"/><stop offset="0.6" stop-color="#fffafa"/><stop offset="0.9" stop-color="#f6caca"/><stop offset="1" stop-color="#ee9a9a"/></radialGradient></defs>
<circle cx="17" cy="17" r="14.3" fill="url(#cg2)" stroke="#e40f0f" stroke-width="1.9"/>
</svg><div class="t" style="left:904.7px;width:34px;text-align:center;top:555.8px;font-size:20px;line-height:20px;color:#000">2</div>
<div class="a" style="left:1px;top:73px;width:937px;height:161px;border:2px solid #ff0000"></div>
<div class="a" style="left:1px;top:237px;width:937px;height:346px;border:2px solid #ff0000"></div>
</body></html>
